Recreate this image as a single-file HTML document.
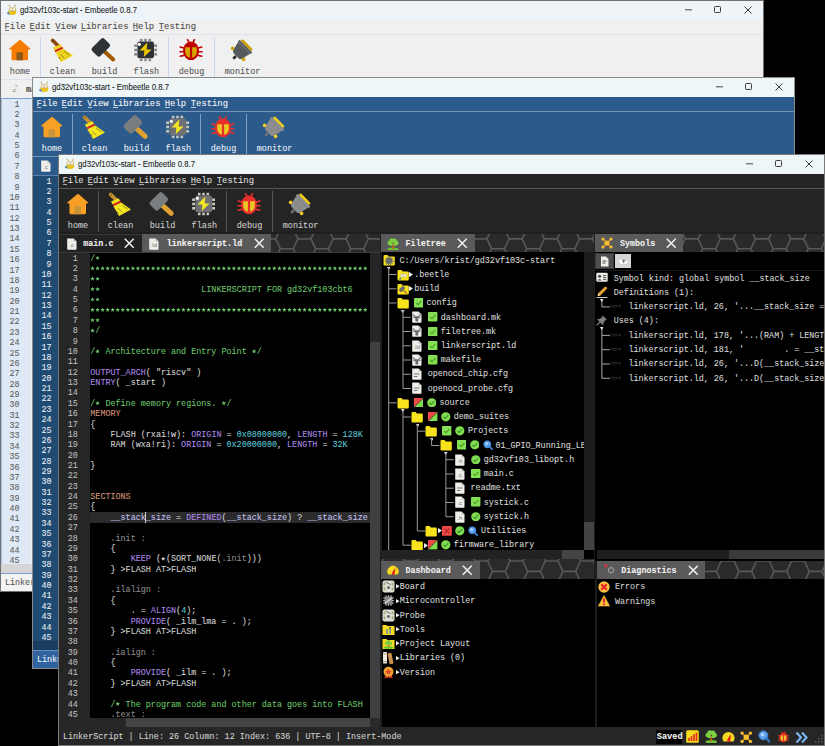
<!DOCTYPE html><html><head><meta charset="utf-8"><style>
*{margin:0;padding:0;box-sizing:border-box}
html,body{width:825px;height:746px;overflow:hidden;background:#000}
body{position:relative;font-family:"Liberation Mono", monospace}
.a{position:absolute}
.win{position:absolute;overflow:hidden}
.t{position:absolute;white-space:pre;line-height:1;-webkit-text-stroke:0.08px currentColor}
.mono{font-family:"Liberation Mono", monospace}
.sans{font-family:"Liberation Sans", sans-serif}
u{text-decoration:underline;text-underline-offset:1px;text-decoration-thickness:1px}
</style></head><body><div class="win" style="left:0px;top:0px;width:764px;height:592px;background:#f0f0f0"><div class="a" style="left:0px;top:0px;width:764px;height:20px;background:#eef4f8;"></div><svg class="a" style="left:5.5px;top:3.5px" width="11.5" height="11.5" viewBox="0 0 10 10"><path d="M1.2 8.6 Q0.8 6.6 3 6.6 L4 9.4 Z" fill="#2f6ec8"/><ellipse cx="5.6" cy="6.6" rx="3.4" ry="3" fill="#e8c21a"/><circle cx="4.3" cy="4.6" r="1.6" fill="#f4eedd" stroke="#b09040" stroke-width="0.4"/><circle cx="6.9" cy="4.6" r="1.6" fill="#f4eedd" stroke="#b09040" stroke-width="0.4"/><path d="M3.6 2.6 L2.6 0.4 M7.4 2.6 L8.2 0.4" stroke="#c8a050" stroke-width="0.8"/></svg><span class="t" style="left:19.80px;top:5.88px;font-size:8.9px;color:#1c1c1c;font-family:'Liberation Sans',sans-serif;transform:scaleX(0.875);transform-origin:0 0;">gd32vf103c-start - Embeetle 0.8.7</span><svg class="a" style="left:744px;top:5.6px" width="8" height="8" viewBox="0 0 8 8"><path d="M0.5 0.5 L7.5 7.5 M7.5 0.5 L0.5 7.5" stroke="#333" stroke-width="0.95"/></svg><svg class="a" style="left:714.1px;top:6.1px" width="7" height="7" viewBox="0 0 7 7"><rect x="0.5" y="0.5" width="6" height="6" rx="0.9" fill="none" stroke="#333" stroke-width="0.95"/></svg><svg class="a" style="left:684.5px;top:6.1px" width="7" height="7" viewBox="0 0 7 7"><path d="M0 3.8 L7 3.8" stroke="#333" stroke-width="0.9"/></svg><div class="a" style="left:0px;top:20px;width:800px;height:14px;background:#f0f0f0;"></div><div class="a" style="left:0px;top:34px;width:800px;height:1px;background:#dbe4ee;"></div><span class="t" style="left:4.40px;top:23.24px;font-size:8.9px;color:#4a4a4a;font-family:'Liberation Mono',monospace;letter-spacing:-0.02px;">File</span><div class="a" style="left:4.7px;top:30.4px;width:4.8px;height:0.8px;background:#4a4a4a;opacity:0.75"></div><span class="t" style="left:29.60px;top:23.24px;font-size:8.9px;color:#4a4a4a;font-family:'Liberation Mono',monospace;letter-spacing:-0.02px;">Edit</span><div class="a" style="left:29.900000000000002px;top:30.4px;width:4.8px;height:0.8px;background:#4a4a4a;opacity:0.75"></div><span class="t" style="left:55.30px;top:23.24px;font-size:8.9px;color:#4a4a4a;font-family:'Liberation Mono',monospace;letter-spacing:-0.02px;">View</span><div class="a" style="left:55.599999999999994px;top:30.4px;width:4.8px;height:0.8px;background:#4a4a4a;opacity:0.75"></div><span class="t" style="left:80.70px;top:23.24px;font-size:8.9px;color:#4a4a4a;font-family:'Liberation Mono',monospace;letter-spacing:-0.02px;">Libraries</span><div class="a" style="left:81.0px;top:30.4px;width:4.8px;height:0.8px;background:#4a4a4a;opacity:0.75"></div><span class="t" style="left:132.80px;top:23.24px;font-size:8.9px;color:#4a4a4a;font-family:'Liberation Mono',monospace;letter-spacing:-0.02px;">Help</span><div class="a" style="left:133.10000000000002px;top:30.4px;width:4.8px;height:0.8px;background:#4a4a4a;opacity:0.75"></div><span class="t" style="left:158.80px;top:23.24px;font-size:8.9px;color:#4a4a4a;font-family:'Liberation Mono',monospace;letter-spacing:-0.02px;">Testing</span><div class="a" style="left:159.10000000000002px;top:30.4px;width:4.8px;height:0.8px;background:#4a4a4a;opacity:0.75"></div><div class="a" style="left:0px;top:35px;width:800px;height:44px;background:#f0f0f0;"></div><div class="a" style="left:40.2px;top:37px;width:1px;height:41px;background:#c9d7e8;"></div><div class="a" style="left:168.2px;top:37px;width:1px;height:41px;background:#c9d7e8;"></div><div class="a" style="left:214.0px;top:37px;width:1px;height:41px;background:#c9d7e8;"></div><svg class="a" style="left:5.5px;top:36px" width="28" height="28" viewBox="0 0 28 28"><path d="M13.5 4 Q14 3.6 14.5 4 L24.2 12.6 Q24.5 13.6 23.5 13.6 L22 13.6 L22 23 Q22 24.3 20.7 24.3 L6.8 24.3 Q5.5 24.3 5.5 23 L5.5 13.6 L4 13.6 Q3 13.6 3.3 12.6 Z" fill="#f57c00"/><path d="M10.5 24.3 L10.5 17.5 Q10.5 16.3 11.7 16.3 L15.8 16.3 Q17 16.3 17 17.5 L17 24.3 Z" fill="#8b5a1a"/></svg><span class="t" style="left:9.80px;top:67.54px;font-size:8.5px;color:#555555;font-family:'Liberation Mono',monospace;">home</span><svg class="a" style="left:48px;top:36px" width="28" height="28" viewBox="0 0 28 28"><path d="M4.6 4.4 L10.6 10.2" stroke="#8b4a10" stroke-width="3.6" stroke-linecap="round"/><circle cx="5.2" cy="4.8" r="0.7" fill="#5a3a10"/><path d="M5 11.4 L12.4 8.2 L14.2 10.8 L6.6 14.4 Z" fill="#ecd21e"/><path d="M6.6 14.4 L14.2 10.8 L15.2 12.6 L7.4 16.2 Z" fill="#d01010"/><path d="M7.4 16.2 L15.2 12.6 L25 19.6 L13 26 Z" fill="#ecd21e"/><path d="M16.5 15.5 L21.5 19 M12.5 18.5 L16.5 22.5 M10.8 21 L12.4 23.6" stroke="#3a3a10" stroke-width="0.8" stroke-dasharray="0.9 0.5"/></svg><span class="t" style="left:49.77px;top:67.54px;font-size:8.5px;color:#555555;font-family:'Liberation Mono',monospace;">clean</span><svg class="a" style="left:90px;top:36px" width="28" height="28" viewBox="0 0 28 28"><path d="M14.2 15.2 L23.2 23.4" stroke="#a05a00" stroke-width="4" stroke-linecap="round"/><rect x="-8.6" y="-5.8" width="17.2" height="11.6" rx="2.2" fill="#2e3236" transform="translate(10.8 11.4) rotate(-45)"/></svg><span class="t" style="left:91.78px;top:67.54px;font-size:8.5px;color:#555555;font-family:'Liberation Mono',monospace;">build</span><svg class="a" style="left:131.8px;top:36px" width="28" height="28" viewBox="0 0 28 28"><rect x="7.8999999999999995" y="2.8" width="2.6" height="2.6" fill="#8a8a8a"/><rect x="7.8999999999999995" y="22.6" width="2.6" height="2.6" fill="#8a8a8a"/><rect x="2.2" y="8.399999999999999" width="2.8" height="2.6" fill="#8a8a8a"/><rect x="22.2" y="8.399999999999999" width="2.8" height="2.6" fill="#8a8a8a"/><rect x="12.2" y="2.8" width="2.6" height="2.6" fill="#8a8a8a"/><rect x="12.2" y="22.6" width="2.6" height="2.6" fill="#8a8a8a"/><rect x="2.2" y="12.7" width="2.8" height="2.6" fill="#8a8a8a"/><rect x="22.2" y="12.7" width="2.8" height="2.6" fill="#8a8a8a"/><rect x="16.5" y="2.8" width="2.6" height="2.6" fill="#8a8a8a"/><rect x="16.5" y="22.6" width="2.6" height="2.6" fill="#8a8a8a"/><rect x="2.2" y="17.0" width="2.8" height="2.6" fill="#8a8a8a"/><rect x="22.2" y="17.0" width="2.8" height="2.6" fill="#8a8a8a"/><rect x="5.4" y="5.6" width="16.6" height="16.6" rx="2" fill="#2e3236"/><circle cx="7.4" cy="8.3" r="1.6" fill="#fff"/><path d="M15.4 6.6 L7.6 14.4 L12.4 14.6 L11.8 21 L19.6 13.4 L14.6 13.4 Z" fill="#f0c800"/></svg><span class="t" style="left:133.58px;top:67.54px;font-size:8.5px;color:#555555;font-family:'Liberation Mono',monospace;">flash</span><svg class="a" style="left:177px;top:36px" width="28" height="28" viewBox="0 0 28 28"><path d="M10.5 3.6 L11.8 6 M17.5 3.6 L16.2 6 M3.2 11 L7 12 M3 15.8 L7 15.8 M3.2 20.2 L7 19.4 M24.8 11 L21 12 M25 15.8 L21 15.8 M24.8 20.2 L21 19.4" stroke="#c00000" stroke-width="1.6" stroke-linecap="round"/><ellipse cx="14" cy="14.8" rx="8" ry="9.3" fill="#c00000"/><path d="M8.2 11.2 L12.9 11.2 L12.9 21.8 Q8.6 20.6 8.2 16 Z" fill="#d4a800"/><path d="M19.8 11.2 L15.1 11.2 L15.1 21.8 Q19.4 20.6 19.8 16 Z" fill="#d4a800"/></svg><span class="t" style="left:178.78px;top:67.54px;font-size:8.5px;color:#555555;font-family:'Liberation Mono',monospace;">debug</span><svg class="a" style="left:228px;top:36px" width="28" height="28" viewBox="0 0 28 28"><g transform="rotate(45 14 14)"><path d="M5.6 11 L22.4 11 L20.2 20 Q19.6 22.2 17.4 22.2 L10.6 22.2 Q8.4 22.2 7.8 20 Z" fill="#55595d"/><rect x="5" y="8.3" width="18" height="2.8" rx="0.8" fill="#5e6266"/><rect x="6.6" y="5.8" width="14.6" height="2.6" rx="1.2" fill="#c8a000"/><rect x="12.6" y="22.5" width="2.8" height="4" rx="1" fill="#2a2a2a"/></g><circle cx="4.6" cy="12.4" r="1.8" fill="#c8a000"/><circle cx="15.6" cy="23.4" r="1.8" fill="#c8a000"/></svg><span class="t" style="left:224.72px;top:67.54px;font-size:8.5px;color:#555555;font-family:'Liberation Mono',monospace;">monitor</span><div class="a" style="left:0px;top:79px;width:764px;height:1px;background:#dbe4ee;"></div><div class="a" style="left:0px;top:80px;width:764px;height:18px;background:#f0f0f0;"></div><div class="a" style="left:0px;top:98px;width:764px;height:1px;background:#7f9fcf;"></div><svg class="a" style="left:7.5px;top:82.5px" width="12" height="12.5" viewBox="0 0 12 12.5"><path d="M1.2 0.5 L7.5 0.5 L10.5 3.5 L10.5 11 Q10.5 11.8 9.7 11.8 L2 11.8 Q1.2 11.8 1.2 11 Z" fill="#eeeeea"/><path d="M7.5 0.5 L7.5 3.5 L10.5 3.5 Z" fill="#c4c4bc"/><text x="5.8" y="9.4" font-size="6" text-anchor="middle" fill="#777" font-family="Liberation Sans">.c</text></svg><span class="t" style="left:26.00px;top:85.62px;font-size:8.4px;color:#4a4a4a;font-family:'Liberation Mono',monospace;font-weight:bold;">main.c</span><div class="a" style="left:0px;top:99px;width:31px;height:465px;background:#dfe9f5;"></div><div class="a" style="left:1px;top:98px;width:1px;height:476px;background:#a4bcdc;"></div><span class="t" style="left:14.57px;top:100.63px;font-size:8.38px;color:#5e5e5e;font-family:'Liberation Mono',monospace;">1</span><span class="t" style="left:14.57px;top:111.00px;font-size:8.38px;color:#5e5e5e;font-family:'Liberation Mono',monospace;">2</span><span class="t" style="left:14.57px;top:121.37px;font-size:8.38px;color:#5e5e5e;font-family:'Liberation Mono',monospace;">3</span><span class="t" style="left:14.57px;top:131.74px;font-size:8.38px;color:#5e5e5e;font-family:'Liberation Mono',monospace;">4</span><span class="t" style="left:14.57px;top:142.11px;font-size:8.38px;color:#5e5e5e;font-family:'Liberation Mono',monospace;">5</span><span class="t" style="left:14.57px;top:152.48px;font-size:8.38px;color:#5e5e5e;font-family:'Liberation Mono',monospace;">6</span><span class="t" style="left:14.57px;top:162.85px;font-size:8.38px;color:#5e5e5e;font-family:'Liberation Mono',monospace;">7</span><span class="t" style="left:14.57px;top:173.22px;font-size:8.38px;color:#5e5e5e;font-family:'Liberation Mono',monospace;">8</span><span class="t" style="left:14.57px;top:183.59px;font-size:8.38px;color:#5e5e5e;font-family:'Liberation Mono',monospace;">9</span><span class="t" style="left:9.54px;top:193.96px;font-size:8.38px;color:#5e5e5e;font-family:'Liberation Mono',monospace;">10</span><span class="t" style="left:9.54px;top:204.33px;font-size:8.38px;color:#5e5e5e;font-family:'Liberation Mono',monospace;">11</span><span class="t" style="left:9.54px;top:214.70px;font-size:8.38px;color:#5e5e5e;font-family:'Liberation Mono',monospace;">12</span><span class="t" style="left:9.54px;top:225.07px;font-size:8.38px;color:#5e5e5e;font-family:'Liberation Mono',monospace;">13</span><span class="t" style="left:9.54px;top:235.44px;font-size:8.38px;color:#5e5e5e;font-family:'Liberation Mono',monospace;">14</span><span class="t" style="left:9.54px;top:245.81px;font-size:8.38px;color:#5e5e5e;font-family:'Liberation Mono',monospace;">15</span><span class="t" style="left:9.54px;top:256.18px;font-size:8.38px;color:#5e5e5e;font-family:'Liberation Mono',monospace;">16</span><span class="t" style="left:9.54px;top:266.55px;font-size:8.38px;color:#5e5e5e;font-family:'Liberation Mono',monospace;">17</span><span class="t" style="left:9.54px;top:276.92px;font-size:8.38px;color:#5e5e5e;font-family:'Liberation Mono',monospace;">18</span><span class="t" style="left:9.54px;top:287.29px;font-size:8.38px;color:#5e5e5e;font-family:'Liberation Mono',monospace;">19</span><span class="t" style="left:9.54px;top:297.66px;font-size:8.38px;color:#5e5e5e;font-family:'Liberation Mono',monospace;">20</span><span class="t" style="left:9.54px;top:308.03px;font-size:8.38px;color:#5e5e5e;font-family:'Liberation Mono',monospace;">21</span><span class="t" style="left:9.54px;top:318.40px;font-size:8.38px;color:#5e5e5e;font-family:'Liberation Mono',monospace;">22</span><span class="t" style="left:9.54px;top:328.77px;font-size:8.38px;color:#5e5e5e;font-family:'Liberation Mono',monospace;">23</span><span class="t" style="left:9.54px;top:339.14px;font-size:8.38px;color:#5e5e5e;font-family:'Liberation Mono',monospace;">24</span><span class="t" style="left:9.54px;top:349.51px;font-size:8.38px;color:#5e5e5e;font-family:'Liberation Mono',monospace;">25</span><span class="t" style="left:9.54px;top:359.88px;font-size:8.38px;color:#5e5e5e;font-family:'Liberation Mono',monospace;">26</span><span class="t" style="left:9.54px;top:370.25px;font-size:8.38px;color:#5e5e5e;font-family:'Liberation Mono',monospace;">27</span><span class="t" style="left:9.54px;top:380.62px;font-size:8.38px;color:#5e5e5e;font-family:'Liberation Mono',monospace;">28</span><span class="t" style="left:9.54px;top:390.99px;font-size:8.38px;color:#5e5e5e;font-family:'Liberation Mono',monospace;">29</span><span class="t" style="left:9.54px;top:401.36px;font-size:8.38px;color:#5e5e5e;font-family:'Liberation Mono',monospace;">30</span><span class="t" style="left:9.54px;top:411.73px;font-size:8.38px;color:#5e5e5e;font-family:'Liberation Mono',monospace;">31</span><span class="t" style="left:9.54px;top:422.10px;font-size:8.38px;color:#5e5e5e;font-family:'Liberation Mono',monospace;">32</span><span class="t" style="left:9.54px;top:432.47px;font-size:8.38px;color:#5e5e5e;font-family:'Liberation Mono',monospace;">33</span><span class="t" style="left:9.54px;top:442.84px;font-size:8.38px;color:#5e5e5e;font-family:'Liberation Mono',monospace;">34</span><span class="t" style="left:9.54px;top:453.21px;font-size:8.38px;color:#5e5e5e;font-family:'Liberation Mono',monospace;">35</span><span class="t" style="left:9.54px;top:463.58px;font-size:8.38px;color:#5e5e5e;font-family:'Liberation Mono',monospace;">36</span><span class="t" style="left:9.54px;top:473.95px;font-size:8.38px;color:#5e5e5e;font-family:'Liberation Mono',monospace;">37</span><span class="t" style="left:9.54px;top:484.32px;font-size:8.38px;color:#5e5e5e;font-family:'Liberation Mono',monospace;">38</span><span class="t" style="left:9.54px;top:494.69px;font-size:8.38px;color:#5e5e5e;font-family:'Liberation Mono',monospace;">39</span><span class="t" style="left:9.54px;top:505.06px;font-size:8.38px;color:#5e5e5e;font-family:'Liberation Mono',monospace;">40</span><span class="t" style="left:9.54px;top:515.43px;font-size:8.38px;color:#5e5e5e;font-family:'Liberation Mono',monospace;">41</span><span class="t" style="left:9.54px;top:525.80px;font-size:8.38px;color:#5e5e5e;font-family:'Liberation Mono',monospace;">42</span><span class="t" style="left:9.54px;top:536.17px;font-size:8.38px;color:#5e5e5e;font-family:'Liberation Mono',monospace;">43</span><span class="t" style="left:9.54px;top:546.54px;font-size:8.38px;color:#5e5e5e;font-family:'Liberation Mono',monospace;">44</span><span class="t" style="left:9.54px;top:556.91px;font-size:8.38px;color:#5e5e5e;font-family:'Liberation Mono',monospace;">45</span><div class="a" style="left:0px;top:564px;width:764px;height:9px;background:#d6d6d6;"></div><div class="a" style="left:0px;top:573px;width:764px;height:1px;background:#7f9fcf;"></div><div class="a" style="left:0px;top:574px;width:764px;height:17px;background:#f3f3f3;"></div><span class="t" style="left:4.90px;top:579.39px;font-size:8.44px;color:#555;font-family:'Liberation Mono',monospace;">LinkerScript | Line: 26 Column: 12 Index: 636 | UTF-8 | Insert-Mode</span><div class="a" style="left:0;top:0;width:764px;height:592px;border:1px solid #707070"></div></div><div class="win" style="left:32px;top:77px;width:763px;height:592px;background:#2c5a8a"><div class="a" style="left:0px;top:0px;width:763px;height:20px;background:#eef6f8;"></div><svg class="a" style="left:5.5px;top:3.5px" width="11.5" height="11.5" viewBox="0 0 10 10"><path d="M1.2 8.6 Q0.8 6.6 3 6.6 L4 9.4 Z" fill="#2f6ec8"/><ellipse cx="5.6" cy="6.6" rx="3.4" ry="3" fill="#e8c21a"/><circle cx="4.3" cy="4.6" r="1.6" fill="#f4eedd" stroke="#b09040" stroke-width="0.4"/><circle cx="6.9" cy="4.6" r="1.6" fill="#f4eedd" stroke="#b09040" stroke-width="0.4"/><path d="M3.6 2.6 L2.6 0.4 M7.4 2.6 L8.2 0.4" stroke="#c8a050" stroke-width="0.8"/></svg><span class="t" style="left:19.80px;top:5.88px;font-size:8.9px;color:#1c1c1c;font-family:'Liberation Sans',sans-serif;transform:scaleX(0.875);transform-origin:0 0;">gd32vf103c-start - Embeetle 0.8.7</span><svg class="a" style="left:743px;top:5.6px" width="8" height="8" viewBox="0 0 8 8"><path d="M0.5 0.5 L7.5 7.5 M7.5 0.5 L0.5 7.5" stroke="#333" stroke-width="0.95"/></svg><svg class="a" style="left:713.1px;top:6.1px" width="7" height="7" viewBox="0 0 7 7"><rect x="0.5" y="0.5" width="6" height="6" rx="0.9" fill="none" stroke="#333" stroke-width="0.95"/></svg><svg class="a" style="left:683.5px;top:6.1px" width="7" height="7" viewBox="0 0 7 7"><path d="M0 3.8 L7 3.8" stroke="#333" stroke-width="0.9"/></svg><div class="a" style="left:0px;top:20px;width:800px;height:14px;background:#2c5a8a;"></div><div class="a" style="left:0px;top:34px;width:800px;height:1px;background:#7896b8;"></div><span class="t" style="left:4.40px;top:23.24px;font-size:8.9px;color:#f2f6fa;font-family:'Liberation Mono',monospace;letter-spacing:-0.02px;">File</span><div class="a" style="left:4.7px;top:30.4px;width:4.8px;height:0.8px;background:#f2f6fa;opacity:0.75"></div><span class="t" style="left:29.60px;top:23.24px;font-size:8.9px;color:#f2f6fa;font-family:'Liberation Mono',monospace;letter-spacing:-0.02px;">Edit</span><div class="a" style="left:29.900000000000002px;top:30.4px;width:4.8px;height:0.8px;background:#f2f6fa;opacity:0.75"></div><span class="t" style="left:55.30px;top:23.24px;font-size:8.9px;color:#f2f6fa;font-family:'Liberation Mono',monospace;letter-spacing:-0.02px;">View</span><div class="a" style="left:55.599999999999994px;top:30.4px;width:4.8px;height:0.8px;background:#f2f6fa;opacity:0.75"></div><span class="t" style="left:80.70px;top:23.24px;font-size:8.9px;color:#f2f6fa;font-family:'Liberation Mono',monospace;letter-spacing:-0.02px;">Libraries</span><div class="a" style="left:81.0px;top:30.4px;width:4.8px;height:0.8px;background:#f2f6fa;opacity:0.75"></div><span class="t" style="left:132.80px;top:23.24px;font-size:8.9px;color:#f2f6fa;font-family:'Liberation Mono',monospace;letter-spacing:-0.02px;">Help</span><div class="a" style="left:133.10000000000002px;top:30.4px;width:4.8px;height:0.8px;background:#f2f6fa;opacity:0.75"></div><span class="t" style="left:158.80px;top:23.24px;font-size:8.9px;color:#f2f6fa;font-family:'Liberation Mono',monospace;letter-spacing:-0.02px;">Testing</span><div class="a" style="left:159.10000000000002px;top:30.4px;width:4.8px;height:0.8px;background:#f2f6fa;opacity:0.75"></div><div class="a" style="left:0px;top:35px;width:800px;height:44px;background:#2c5a8a;"></div><div class="a" style="left:40.2px;top:37px;width:1px;height:41px;background:#7f9fc4;"></div><div class="a" style="left:168.2px;top:37px;width:1px;height:41px;background:#7f9fc4;"></div><div class="a" style="left:214.0px;top:37px;width:1px;height:41px;background:#7f9fc4;"></div><svg class="a" style="left:5.5px;top:36px" width="28" height="28" viewBox="0 0 28 28"><path d="M13.5 4 Q14 3.6 14.5 4 L24.2 12.6 Q24.5 13.6 23.5 13.6 L22 13.6 L22 23 Q22 24.3 20.7 24.3 L6.8 24.3 Q5.5 24.3 5.5 23 L5.5 13.6 L4 13.6 Q3 13.6 3.3 12.6 Z" fill="#f7a025"/><path d="M10.5 24.3 L10.5 17.5 Q10.5 16.3 11.7 16.3 L15.8 16.3 Q17 16.3 17 17.5 L17 24.3 Z" fill="#c8943a"/></svg><span class="t" style="left:9.80px;top:67.54px;font-size:8.5px;color:#e8eef6;font-family:'Liberation Mono',monospace;">home</span><svg class="a" style="left:48px;top:36px" width="28" height="28" viewBox="0 0 28 28"><path d="M4.6 4.4 L10.6 10.2" stroke="#c8902e" stroke-width="3.6" stroke-linecap="round"/><circle cx="5.2" cy="4.8" r="0.7" fill="#5a3a10"/><path d="M5 11.4 L12.4 8.2 L14.2 10.8 L6.6 14.4 Z" fill="#f3e620"/><path d="M6.6 14.4 L14.2 10.8 L15.2 12.6 L7.4 16.2 Z" fill="#e8251c"/><path d="M7.4 16.2 L15.2 12.6 L25 19.6 L13 26 Z" fill="#f3e620"/><path d="M16.5 15.5 L21.5 19 M12.5 18.5 L16.5 22.5 M10.8 21 L12.4 23.6" stroke="#3a3a10" stroke-width="0.8" stroke-dasharray="0.9 0.5"/></svg><span class="t" style="left:49.77px;top:67.54px;font-size:8.5px;color:#e8eef6;font-family:'Liberation Mono',monospace;">clean</span><svg class="a" style="left:90px;top:36px" width="28" height="28" viewBox="0 0 28 28"><path d="M14.2 15.2 L23.2 23.4" stroke="#e0a030" stroke-width="5" stroke-linecap="round"/><rect x="-8.6" y="-5.8" width="17.2" height="11.6" rx="2.2" fill="#7a7d80" transform="translate(10.8 11.4) rotate(-45)"/></svg><span class="t" style="left:91.78px;top:67.54px;font-size:8.5px;color:#e8eef6;font-family:'Liberation Mono',monospace;">build</span><svg class="a" style="left:131.8px;top:36px" width="28" height="28" viewBox="0 0 28 28"><rect x="7.8999999999999995" y="2.8" width="2.6" height="2.6" fill="#c8c8be"/><rect x="7.8999999999999995" y="22.6" width="2.6" height="2.6" fill="#c8c8be"/><rect x="2.2" y="8.399999999999999" width="2.8" height="2.6" fill="#c8c8be"/><rect x="22.2" y="8.399999999999999" width="2.8" height="2.6" fill="#c8c8be"/><rect x="12.2" y="2.8" width="2.6" height="2.6" fill="#c8c8be"/><rect x="12.2" y="22.6" width="2.6" height="2.6" fill="#c8c8be"/><rect x="2.2" y="12.7" width="2.8" height="2.6" fill="#c8c8be"/><rect x="22.2" y="12.7" width="2.8" height="2.6" fill="#c8c8be"/><rect x="16.5" y="2.8" width="2.6" height="2.6" fill="#c8c8be"/><rect x="16.5" y="22.6" width="2.6" height="2.6" fill="#c8c8be"/><rect x="2.2" y="17.0" width="2.8" height="2.6" fill="#c8c8be"/><rect x="22.2" y="17.0" width="2.8" height="2.6" fill="#c8c8be"/><rect x="5.4" y="5.6" width="16.6" height="16.6" rx="2" fill="#6e7073"/><circle cx="7.4" cy="8.3" r="1.6" fill="#fff"/><path d="M15.4 6.6 L7.6 14.4 L12.4 14.6 L11.8 21 L19.6 13.4 L14.6 13.4 Z" fill="#f6e81e"/></svg><span class="t" style="left:133.58px;top:67.54px;font-size:8.5px;color:#e8eef6;font-family:'Liberation Mono',monospace;">flash</span><svg class="a" style="left:177px;top:36px" width="28" height="28" viewBox="0 0 28 28"><path d="M10.5 3.6 L11.8 6 M17.5 3.6 L16.2 6 M3.2 11 L7 12 M3 15.8 L7 15.8 M3.2 20.2 L7 19.4 M24.8 11 L21 12 M25 15.8 L21 15.8 M24.8 20.2 L21 19.4" stroke="#e8302a" stroke-width="1.6" stroke-linecap="round"/><ellipse cx="14" cy="14.8" rx="8" ry="9.3" fill="#e8302a"/><path d="M8.2 11.2 L12.9 11.2 L12.9 21.8 Q8.6 20.6 8.2 16 Z" fill="#ecc825"/><path d="M19.8 11.2 L15.1 11.2 L15.1 21.8 Q19.4 20.6 19.8 16 Z" fill="#ecc825"/></svg><span class="t" style="left:178.78px;top:67.54px;font-size:8.5px;color:#e8eef6;font-family:'Liberation Mono',monospace;">debug</span><svg class="a" style="left:228px;top:36px" width="28" height="28" viewBox="0 0 28 28"><g transform="rotate(45 14 14)"><path d="M5.6 11 L22.4 11 L20.2 20 Q19.6 22.2 17.4 22.2 L10.6 22.2 Q8.4 22.2 7.8 20 Z" fill="#8a8c8e"/><rect x="5" y="8.3" width="18" height="2.8" rx="0.8" fill="#8e9092"/><rect x="6.6" y="5.8" width="14.6" height="2.6" rx="1.2" fill="#f0cc20"/><rect x="12.6" y="22.5" width="2.8" height="4" rx="1" fill="#6e7072"/></g><circle cx="4.6" cy="12.4" r="1.8" fill="#f0cc20"/><circle cx="15.6" cy="23.4" r="1.8" fill="#f0cc20"/></svg><span class="t" style="left:224.72px;top:67.54px;font-size:8.5px;color:#e8eef6;font-family:'Liberation Mono',monospace;">monitor</span><div class="a" style="left:0px;top:79px;width:763px;height:1px;background:#7896b8;"></div><div class="a" style="left:0px;top:80px;width:763px;height:18px;background:#2c5a8a;"></div><div class="a" style="left:0px;top:98px;width:763px;height:1px;background:#5f83aa;"></div><svg class="a" style="left:7.5px;top:82.5px" width="12" height="12.5" viewBox="0 0 12 12.5"><path d="M1.2 0.5 L7.5 0.5 L10.5 3.5 L10.5 11 Q10.5 11.8 9.7 11.8 L2 11.8 Q1.2 11.8 1.2 11 Z" fill="#eeeeea"/><path d="M7.5 0.5 L7.5 3.5 L10.5 3.5 Z" fill="#c4c4bc"/><text x="5.8" y="9.4" font-size="6" text-anchor="middle" fill="#777" font-family="Liberation Sans">.c</text></svg><span class="t" style="left:26.00px;top:85.62px;font-size:8.4px;color:#f2f6fa;font-family:'Liberation Mono',monospace;font-weight:bold;">main.c</span><div class="a" style="left:0px;top:99px;width:31px;height:465px;background:#1f4a72;"></div><span class="t" style="left:14.57px;top:100.63px;font-size:8.38px;color:#e6edf4;font-family:'Liberation Mono',monospace;">1</span><span class="t" style="left:14.57px;top:111.00px;font-size:8.38px;color:#e6edf4;font-family:'Liberation Mono',monospace;">2</span><span class="t" style="left:14.57px;top:121.37px;font-size:8.38px;color:#e6edf4;font-family:'Liberation Mono',monospace;">3</span><span class="t" style="left:14.57px;top:131.74px;font-size:8.38px;color:#e6edf4;font-family:'Liberation Mono',monospace;">4</span><span class="t" style="left:14.57px;top:142.11px;font-size:8.38px;color:#e6edf4;font-family:'Liberation Mono',monospace;">5</span><span class="t" style="left:14.57px;top:152.48px;font-size:8.38px;color:#e6edf4;font-family:'Liberation Mono',monospace;">6</span><span class="t" style="left:14.57px;top:162.85px;font-size:8.38px;color:#e6edf4;font-family:'Liberation Mono',monospace;">7</span><span class="t" style="left:14.57px;top:173.22px;font-size:8.38px;color:#e6edf4;font-family:'Liberation Mono',monospace;">8</span><span class="t" style="left:14.57px;top:183.59px;font-size:8.38px;color:#e6edf4;font-family:'Liberation Mono',monospace;">9</span><span class="t" style="left:9.54px;top:193.96px;font-size:8.38px;color:#e6edf4;font-family:'Liberation Mono',monospace;">10</span><span class="t" style="left:9.54px;top:204.33px;font-size:8.38px;color:#e6edf4;font-family:'Liberation Mono',monospace;">11</span><span class="t" style="left:9.54px;top:214.70px;font-size:8.38px;color:#e6edf4;font-family:'Liberation Mono',monospace;">12</span><span class="t" style="left:9.54px;top:225.07px;font-size:8.38px;color:#e6edf4;font-family:'Liberation Mono',monospace;">13</span><span class="t" style="left:9.54px;top:235.44px;font-size:8.38px;color:#e6edf4;font-family:'Liberation Mono',monospace;">14</span><span class="t" style="left:9.54px;top:245.81px;font-size:8.38px;color:#e6edf4;font-family:'Liberation Mono',monospace;">15</span><span class="t" style="left:9.54px;top:256.18px;font-size:8.38px;color:#e6edf4;font-family:'Liberation Mono',monospace;">16</span><span class="t" style="left:9.54px;top:266.55px;font-size:8.38px;color:#e6edf4;font-family:'Liberation Mono',monospace;">17</span><span class="t" style="left:9.54px;top:276.92px;font-size:8.38px;color:#e6edf4;font-family:'Liberation Mono',monospace;">18</span><span class="t" style="left:9.54px;top:287.29px;font-size:8.38px;color:#e6edf4;font-family:'Liberation Mono',monospace;">19</span><span class="t" style="left:9.54px;top:297.66px;font-size:8.38px;color:#e6edf4;font-family:'Liberation Mono',monospace;">20</span><span class="t" style="left:9.54px;top:308.03px;font-size:8.38px;color:#e6edf4;font-family:'Liberation Mono',monospace;">21</span><span class="t" style="left:9.54px;top:318.40px;font-size:8.38px;color:#e6edf4;font-family:'Liberation Mono',monospace;">22</span><span class="t" style="left:9.54px;top:328.77px;font-size:8.38px;color:#e6edf4;font-family:'Liberation Mono',monospace;">23</span><span class="t" style="left:9.54px;top:339.14px;font-size:8.38px;color:#e6edf4;font-family:'Liberation Mono',monospace;">24</span><span class="t" style="left:9.54px;top:349.51px;font-size:8.38px;color:#e6edf4;font-family:'Liberation Mono',monospace;">25</span><span class="t" style="left:9.54px;top:359.88px;font-size:8.38px;color:#e6edf4;font-family:'Liberation Mono',monospace;">26</span><span class="t" style="left:9.54px;top:370.25px;font-size:8.38px;color:#e6edf4;font-family:'Liberation Mono',monospace;">27</span><span class="t" style="left:9.54px;top:380.62px;font-size:8.38px;color:#e6edf4;font-family:'Liberation Mono',monospace;">28</span><span class="t" style="left:9.54px;top:390.99px;font-size:8.38px;color:#e6edf4;font-family:'Liberation Mono',monospace;">29</span><span class="t" style="left:9.54px;top:401.36px;font-size:8.38px;color:#e6edf4;font-family:'Liberation Mono',monospace;">30</span><span class="t" style="left:9.54px;top:411.73px;font-size:8.38px;color:#e6edf4;font-family:'Liberation Mono',monospace;">31</span><span class="t" style="left:9.54px;top:422.10px;font-size:8.38px;color:#e6edf4;font-family:'Liberation Mono',monospace;">32</span><span class="t" style="left:9.54px;top:432.47px;font-size:8.38px;color:#e6edf4;font-family:'Liberation Mono',monospace;">33</span><span class="t" style="left:9.54px;top:442.84px;font-size:8.38px;color:#e6edf4;font-family:'Liberation Mono',monospace;">34</span><span class="t" style="left:9.54px;top:453.21px;font-size:8.38px;color:#e6edf4;font-family:'Liberation Mono',monospace;">35</span><span class="t" style="left:9.54px;top:463.58px;font-size:8.38px;color:#e6edf4;font-family:'Liberation Mono',monospace;">36</span><span class="t" style="left:9.54px;top:473.95px;font-size:8.38px;color:#e6edf4;font-family:'Liberation Mono',monospace;">37</span><span class="t" style="left:9.54px;top:484.32px;font-size:8.38px;color:#e6edf4;font-family:'Liberation Mono',monospace;">38</span><span class="t" style="left:9.54px;top:494.69px;font-size:8.38px;color:#e6edf4;font-family:'Liberation Mono',monospace;">39</span><span class="t" style="left:9.54px;top:505.06px;font-size:8.38px;color:#e6edf4;font-family:'Liberation Mono',monospace;">40</span><span class="t" style="left:9.54px;top:515.43px;font-size:8.38px;color:#e6edf4;font-family:'Liberation Mono',monospace;">41</span><span class="t" style="left:9.54px;top:525.80px;font-size:8.38px;color:#e6edf4;font-family:'Liberation Mono',monospace;">42</span><span class="t" style="left:9.54px;top:536.17px;font-size:8.38px;color:#e6edf4;font-family:'Liberation Mono',monospace;">43</span><span class="t" style="left:9.54px;top:546.54px;font-size:8.38px;color:#e6edf4;font-family:'Liberation Mono',monospace;">44</span><span class="t" style="left:9.54px;top:556.91px;font-size:8.38px;color:#e6edf4;font-family:'Liberation Mono',monospace;">45</span><div class="a" style="left:0px;top:564px;width:763px;height:9px;background:#1b3d60;"></div><div class="a" style="left:0px;top:573px;width:763px;height:1px;background:#6c90bc;"></div><div class="a" style="left:0px;top:574px;width:763px;height:17px;background:#3063a0;"></div><span class="t" style="left:4.90px;top:579.39px;font-size:8.44px;color:#f0f4f8;font-family:'Liberation Mono',monospace;">LinkerScript | Line: 26 Column: 12 Index: 636 | UTF-8 | Insert-Mode</span><div class="a" style="left:0;top:0;width:763px;height:592px;border:1px solid #8a8a8a"></div></div><div class="win" style="left:58px;top:154px;width:767px;height:592px;background:#242424"><div class="a" style="left:0px;top:0px;width:767px;height:20px;background:#eef6f8;"></div><svg class="a" style="left:5.5px;top:3.5px" width="11.5" height="11.5" viewBox="0 0 10 10"><path d="M1.2 8.6 Q0.8 6.6 3 6.6 L4 9.4 Z" fill="#2f6ec8"/><ellipse cx="5.6" cy="6.6" rx="3.4" ry="3" fill="#e8c21a"/><circle cx="4.3" cy="4.6" r="1.6" fill="#f4eedd" stroke="#b09040" stroke-width="0.4"/><circle cx="6.9" cy="4.6" r="1.6" fill="#f4eedd" stroke="#b09040" stroke-width="0.4"/><path d="M3.6 2.6 L2.6 0.4 M7.4 2.6 L8.2 0.4" stroke="#c8a050" stroke-width="0.8"/></svg><span class="t" style="left:19.80px;top:5.88px;font-size:8.9px;color:#1c1c1c;font-family:'Liberation Sans',sans-serif;transform:scaleX(0.875);transform-origin:0 0;">gd32vf103c-start - Embeetle 0.8.7</span><svg class="a" style="left:747px;top:5.6px" width="8" height="8" viewBox="0 0 8 8"><path d="M0.5 0.5 L7.5 7.5 M7.5 0.5 L0.5 7.5" stroke="#333" stroke-width="0.95"/></svg><svg class="a" style="left:717.1px;top:6.1px" width="7" height="7" viewBox="0 0 7 7"><rect x="0.5" y="0.5" width="6" height="6" rx="0.9" fill="none" stroke="#333" stroke-width="0.95"/></svg><svg class="a" style="left:687.5px;top:6.1px" width="7" height="7" viewBox="0 0 7 7"><path d="M0 3.8 L7 3.8" stroke="#333" stroke-width="0.9"/></svg><div class="a" style="left:0px;top:20px;width:800px;height:14px;background:#242424;"></div><div class="a" style="left:0px;top:34px;width:800px;height:1px;background:#555555;"></div><span class="t" style="left:4.40px;top:23.24px;font-size:8.9px;color:#dedede;font-family:'Liberation Mono',monospace;letter-spacing:-0.02px;">File</span><div class="a" style="left:4.7px;top:30.4px;width:4.8px;height:0.8px;background:#dedede;opacity:0.75"></div><span class="t" style="left:29.60px;top:23.24px;font-size:8.9px;color:#dedede;font-family:'Liberation Mono',monospace;letter-spacing:-0.02px;">Edit</span><div class="a" style="left:29.900000000000002px;top:30.4px;width:4.8px;height:0.8px;background:#dedede;opacity:0.75"></div><span class="t" style="left:55.30px;top:23.24px;font-size:8.9px;color:#dedede;font-family:'Liberation Mono',monospace;letter-spacing:-0.02px;">View</span><div class="a" style="left:55.599999999999994px;top:30.4px;width:4.8px;height:0.8px;background:#dedede;opacity:0.75"></div><span class="t" style="left:80.70px;top:23.24px;font-size:8.9px;color:#dedede;font-family:'Liberation Mono',monospace;letter-spacing:-0.02px;">Libraries</span><div class="a" style="left:81.0px;top:30.4px;width:4.8px;height:0.8px;background:#dedede;opacity:0.75"></div><span class="t" style="left:132.80px;top:23.24px;font-size:8.9px;color:#dedede;font-family:'Liberation Mono',monospace;letter-spacing:-0.02px;">Help</span><div class="a" style="left:133.10000000000002px;top:30.4px;width:4.8px;height:0.8px;background:#dedede;opacity:0.75"></div><span class="t" style="left:158.80px;top:23.24px;font-size:8.9px;color:#dedede;font-family:'Liberation Mono',monospace;letter-spacing:-0.02px;">Testing</span><div class="a" style="left:159.10000000000002px;top:30.4px;width:4.8px;height:0.8px;background:#dedede;opacity:0.75"></div><div class="a" style="left:0px;top:35px;width:800px;height:44px;background:#242424;"></div><div class="a" style="left:40.2px;top:37px;width:1px;height:41px;background:#555555;"></div><div class="a" style="left:168.2px;top:37px;width:1px;height:41px;background:#555555;"></div><div class="a" style="left:214.0px;top:37px;width:1px;height:41px;background:#555555;"></div><svg class="a" style="left:5.5px;top:36px" width="28" height="28" viewBox="0 0 28 28"><path d="M13.5 4 Q14 3.6 14.5 4 L24.2 12.6 Q24.5 13.6 23.5 13.6 L22 13.6 L22 23 Q22 24.3 20.7 24.3 L6.8 24.3 Q5.5 24.3 5.5 23 L5.5 13.6 L4 13.6 Q3 13.6 3.3 12.6 Z" fill="#f7a025"/><path d="M10.5 24.3 L10.5 17.5 Q10.5 16.3 11.7 16.3 L15.8 16.3 Q17 16.3 17 17.5 L17 24.3 Z" fill="#c8943a"/></svg><span class="t" style="left:9.80px;top:67.54px;font-size:8.5px;color:#cccccc;font-family:'Liberation Mono',monospace;">home</span><svg class="a" style="left:48px;top:36px" width="28" height="28" viewBox="0 0 28 28"><path d="M4.6 4.4 L10.6 10.2" stroke="#c8902e" stroke-width="3.6" stroke-linecap="round"/><circle cx="5.2" cy="4.8" r="0.7" fill="#5a3a10"/><path d="M5 11.4 L12.4 8.2 L14.2 10.8 L6.6 14.4 Z" fill="#f3e620"/><path d="M6.6 14.4 L14.2 10.8 L15.2 12.6 L7.4 16.2 Z" fill="#e8251c"/><path d="M7.4 16.2 L15.2 12.6 L25 19.6 L13 26 Z" fill="#f3e620"/><path d="M16.5 15.5 L21.5 19 M12.5 18.5 L16.5 22.5 M10.8 21 L12.4 23.6" stroke="#3a3a10" stroke-width="0.8" stroke-dasharray="0.9 0.5"/></svg><span class="t" style="left:49.77px;top:67.54px;font-size:8.5px;color:#cccccc;font-family:'Liberation Mono',monospace;">clean</span><svg class="a" style="left:90px;top:36px" width="28" height="28" viewBox="0 0 28 28"><path d="M14.2 15.2 L23.2 23.4" stroke="#e0a030" stroke-width="5" stroke-linecap="round"/><rect x="-8.6" y="-5.8" width="17.2" height="11.6" rx="2.2" fill="#7a7d80" transform="translate(10.8 11.4) rotate(-45)"/></svg><span class="t" style="left:91.78px;top:67.54px;font-size:8.5px;color:#cccccc;font-family:'Liberation Mono',monospace;">build</span><svg class="a" style="left:131.8px;top:36px" width="28" height="28" viewBox="0 0 28 28"><rect x="7.8999999999999995" y="2.8" width="2.6" height="2.6" fill="#c8c8be"/><rect x="7.8999999999999995" y="22.6" width="2.6" height="2.6" fill="#c8c8be"/><rect x="2.2" y="8.399999999999999" width="2.8" height="2.6" fill="#c8c8be"/><rect x="22.2" y="8.399999999999999" width="2.8" height="2.6" fill="#c8c8be"/><rect x="12.2" y="2.8" width="2.6" height="2.6" fill="#c8c8be"/><rect x="12.2" y="22.6" width="2.6" height="2.6" fill="#c8c8be"/><rect x="2.2" y="12.7" width="2.8" height="2.6" fill="#c8c8be"/><rect x="22.2" y="12.7" width="2.8" height="2.6" fill="#c8c8be"/><rect x="16.5" y="2.8" width="2.6" height="2.6" fill="#c8c8be"/><rect x="16.5" y="22.6" width="2.6" height="2.6" fill="#c8c8be"/><rect x="2.2" y="17.0" width="2.8" height="2.6" fill="#c8c8be"/><rect x="22.2" y="17.0" width="2.8" height="2.6" fill="#c8c8be"/><rect x="5.4" y="5.6" width="16.6" height="16.6" rx="2" fill="#6e7073"/><circle cx="7.4" cy="8.3" r="1.6" fill="#fff"/><path d="M15.4 6.6 L7.6 14.4 L12.4 14.6 L11.8 21 L19.6 13.4 L14.6 13.4 Z" fill="#f6e81e"/></svg><span class="t" style="left:133.58px;top:67.54px;font-size:8.5px;color:#cccccc;font-family:'Liberation Mono',monospace;">flash</span><svg class="a" style="left:177px;top:36px" width="28" height="28" viewBox="0 0 28 28"><path d="M10.5 3.6 L11.8 6 M17.5 3.6 L16.2 6 M3.2 11 L7 12 M3 15.8 L7 15.8 M3.2 20.2 L7 19.4 M24.8 11 L21 12 M25 15.8 L21 15.8 M24.8 20.2 L21 19.4" stroke="#e8302a" stroke-width="1.6" stroke-linecap="round"/><ellipse cx="14" cy="14.8" rx="8" ry="9.3" fill="#e8302a"/><path d="M8.2 11.2 L12.9 11.2 L12.9 21.8 Q8.6 20.6 8.2 16 Z" fill="#ecc825"/><path d="M19.8 11.2 L15.1 11.2 L15.1 21.8 Q19.4 20.6 19.8 16 Z" fill="#ecc825"/></svg><span class="t" style="left:178.78px;top:67.54px;font-size:8.5px;color:#cccccc;font-family:'Liberation Mono',monospace;">debug</span><svg class="a" style="left:228px;top:36px" width="28" height="28" viewBox="0 0 28 28"><g transform="rotate(45 14 14)"><path d="M5.6 11 L22.4 11 L20.2 20 Q19.6 22.2 17.4 22.2 L10.6 22.2 Q8.4 22.2 7.8 20 Z" fill="#8a8c8e"/><rect x="5" y="8.3" width="18" height="2.8" rx="0.8" fill="#8e9092"/><rect x="6.6" y="5.8" width="14.6" height="2.6" rx="1.2" fill="#f0cc20"/><rect x="12.6" y="22.5" width="2.8" height="4" rx="1" fill="#6e7072"/></g><circle cx="4.6" cy="12.4" r="1.8" fill="#f0cc20"/><circle cx="15.6" cy="23.4" r="1.8" fill="#f0cc20"/></svg><span class="t" style="left:224.72px;top:67.54px;font-size:8.5px;color:#cccccc;font-family:'Liberation Mono',monospace;">monitor</span><div class="a" style="left:0px;top:78px;width:767px;height:2px;background:#1f1f1f;"></div><div class="a" style="left:0px;top:80px;width:767px;height:18px;background:#262626;"></div><div class="a" style="left:0px;top:573px;width:767px;height:21px;background:#262626;"></div><span class="t" style="left:4.90px;top:579.39px;font-size:8.44px;color:#d0d0d0;font-family:'Liberation Mono',monospace;">LinkerScript | Line: 26 Column: 12 Index: 636 | UTF-8 | Insert-Mode</span><div class="a" style="left:-58px;top:-154px;width:825px;height:746px"><div class="a" style="left:59px;top:252px;width:31px;height:466px;background:#262626;"></div><div class="a" style="left:89.5px;top:253px;width:281px;height:465px;background:#000;"></div><div class="a" style="left:59px;top:252px;width:321px;height:1px;background:#3a3a3a;"></div><div class="a" style="left:89.5px;top:511.75px;width:281px;height:10.8px;background:#2b2b2d;"></div><span class="t" style="left:72.75px;top:254.60px;font-size:8.42px;color:#bdbdbd;font-family:'Liberation Mono',monospace;">1</span><span class="t" style="left:90.30px;top:254.60px;font-size:8.42px;color:#d6d6d6;font-family:'Liberation Mono',monospace;"><span style="color:#6cc36c">/ </span></span><span class="t" style="left:72.75px;top:264.97px;font-size:8.42px;color:#bdbdbd;font-family:'Liberation Mono',monospace;">2</span><span class="t" style="left:90.30px;top:264.97px;font-size:8.42px;color:#d6d6d6;font-family:'Liberation Mono',monospace;"><span style="color:#6cc36c">                                                       </span></span><span class="t" style="left:72.75px;top:275.34px;font-size:8.42px;color:#bdbdbd;font-family:'Liberation Mono',monospace;">3</span><span class="t" style="left:90.30px;top:275.34px;font-size:8.42px;color:#d6d6d6;font-family:'Liberation Mono',monospace;"><span style="color:#6cc36c">  </span></span><span class="t" style="left:72.75px;top:285.71px;font-size:8.42px;color:#bdbdbd;font-family:'Liberation Mono',monospace;">4</span><span class="t" style="left:90.30px;top:285.71px;font-size:8.42px;color:#d6d6d6;font-family:'Liberation Mono',monospace;"><span style="color:#6cc36c">                      LINKERSCRIPT FOR gd32vf103cbt6</span></span><span class="t" style="left:72.75px;top:296.08px;font-size:8.42px;color:#bdbdbd;font-family:'Liberation Mono',monospace;">5</span><span class="t" style="left:90.30px;top:296.08px;font-size:8.42px;color:#d6d6d6;font-family:'Liberation Mono',monospace;"><span style="color:#6cc36c">  </span></span><span class="t" style="left:72.75px;top:306.45px;font-size:8.42px;color:#bdbdbd;font-family:'Liberation Mono',monospace;">6</span><span class="t" style="left:90.30px;top:306.45px;font-size:8.42px;color:#d6d6d6;font-family:'Liberation Mono',monospace;"><span style="color:#6cc36c">                                                       </span></span><span class="t" style="left:72.75px;top:316.82px;font-size:8.42px;color:#bdbdbd;font-family:'Liberation Mono',monospace;">7</span><span class="t" style="left:90.30px;top:316.82px;font-size:8.42px;color:#d6d6d6;font-family:'Liberation Mono',monospace;"><span style="color:#6cc36c">  </span></span><span class="t" style="left:72.75px;top:327.19px;font-size:8.42px;color:#bdbdbd;font-family:'Liberation Mono',monospace;">8</span><span class="t" style="left:90.30px;top:327.19px;font-size:8.42px;color:#d6d6d6;font-family:'Liberation Mono',monospace;"><span style="color:#6cc36c"> /</span></span><span class="t" style="left:72.75px;top:337.56px;font-size:8.42px;color:#bdbdbd;font-family:'Liberation Mono',monospace;">9</span><span class="t" style="left:67.70px;top:347.93px;font-size:8.42px;color:#bdbdbd;font-family:'Liberation Mono',monospace;">10</span><span class="t" style="left:90.30px;top:347.93px;font-size:8.42px;color:#d6d6d6;font-family:'Liberation Mono',monospace;"><span style="color:#6cc36c">/  Architecture and Entry Point  /</span></span><span class="t" style="left:67.70px;top:358.30px;font-size:8.42px;color:#bdbdbd;font-family:'Liberation Mono',monospace;">11</span><span class="t" style="left:67.70px;top:368.67px;font-size:8.42px;color:#bdbdbd;font-family:'Liberation Mono',monospace;">12</span><span class="t" style="left:90.30px;top:368.67px;font-size:8.42px;color:#d6d6d6;font-family:'Liberation Mono',monospace;"><span style="color:#ac8ae6">OUTPUT_ARCH</span><span style="color:#d6d6d6">( "riscv" )</span></span><span class="t" style="left:67.70px;top:379.04px;font-size:8.42px;color:#bdbdbd;font-family:'Liberation Mono',monospace;">13</span><span class="t" style="left:90.30px;top:379.04px;font-size:8.42px;color:#d6d6d6;font-family:'Liberation Mono',monospace;"><span style="color:#ac8ae6">ENTRY</span><span style="color:#d6d6d6">( _start )</span></span><span class="t" style="left:67.70px;top:389.41px;font-size:8.42px;color:#bdbdbd;font-family:'Liberation Mono',monospace;">14</span><span class="t" style="left:67.70px;top:399.78px;font-size:8.42px;color:#bdbdbd;font-family:'Liberation Mono',monospace;">15</span><span class="t" style="left:90.30px;top:399.78px;font-size:8.42px;color:#d6d6d6;font-family:'Liberation Mono',monospace;"><span style="color:#6cc36c">/  Define memory regions.  /</span></span><span class="t" style="left:67.70px;top:410.15px;font-size:8.42px;color:#bdbdbd;font-family:'Liberation Mono',monospace;">16</span><span class="t" style="left:90.30px;top:410.15px;font-size:8.42px;color:#d6d6d6;font-family:'Liberation Mono',monospace;"><span style="color:#d9977a">MEMORY</span></span><span class="t" style="left:67.70px;top:420.52px;font-size:8.42px;color:#bdbdbd;font-family:'Liberation Mono',monospace;">17</span><span class="t" style="left:90.30px;top:420.52px;font-size:8.42px;color:#d6d6d6;font-family:'Liberation Mono',monospace;"><span style="color:#d6d6d6">{</span></span><span class="t" style="left:67.70px;top:430.89px;font-size:8.42px;color:#bdbdbd;font-family:'Liberation Mono',monospace;">18</span><span class="t" style="left:90.30px;top:430.89px;font-size:8.42px;color:#d6d6d6;font-family:'Liberation Mono',monospace;"><span style="color:#d6d6d6">    FLASH (rxai!w): </span><span style="color:#ac8ae6">ORIGIN</span><span style="color:#d6d6d6"> = </span><span style="color:#5ec6d6">0x08000000</span><span style="color:#d6d6d6">, </span><span style="color:#ac8ae6">LENGTH</span><span style="color:#d6d6d6"> = </span><span style="color:#5ec6d6">128K</span></span><span class="t" style="left:67.70px;top:441.26px;font-size:8.42px;color:#bdbdbd;font-family:'Liberation Mono',monospace;">19</span><span class="t" style="left:90.30px;top:441.26px;font-size:8.42px;color:#d6d6d6;font-family:'Liberation Mono',monospace;"><span style="color:#d6d6d6">    RAM (wxa!ri): </span><span style="color:#ac8ae6">ORIGIN</span><span style="color:#d6d6d6"> = </span><span style="color:#5ec6d6">0x20000000</span><span style="color:#d6d6d6">, </span><span style="color:#ac8ae6">LENGTH</span><span style="color:#d6d6d6"> = </span><span style="color:#5ec6d6">32K</span></span><span class="t" style="left:67.70px;top:451.63px;font-size:8.42px;color:#bdbdbd;font-family:'Liberation Mono',monospace;">20</span><span class="t" style="left:67.70px;top:462.00px;font-size:8.42px;color:#bdbdbd;font-family:'Liberation Mono',monospace;">21</span><span class="t" style="left:90.30px;top:462.00px;font-size:8.42px;color:#d6d6d6;font-family:'Liberation Mono',monospace;"><span style="color:#d6d6d6">}</span></span><span class="t" style="left:67.70px;top:472.37px;font-size:8.42px;color:#bdbdbd;font-family:'Liberation Mono',monospace;">22</span><span class="t" style="left:67.70px;top:482.74px;font-size:8.42px;color:#bdbdbd;font-family:'Liberation Mono',monospace;">23</span><span class="t" style="left:67.70px;top:493.11px;font-size:8.42px;color:#bdbdbd;font-family:'Liberation Mono',monospace;">24</span><span class="t" style="left:90.30px;top:493.11px;font-size:8.42px;color:#d6d6d6;font-family:'Liberation Mono',monospace;"><span style="color:#d9977a">SECTIONS</span></span><span class="t" style="left:67.70px;top:503.48px;font-size:8.42px;color:#bdbdbd;font-family:'Liberation Mono',monospace;">25</span><span class="t" style="left:90.30px;top:503.48px;font-size:8.42px;color:#d6d6d6;font-family:'Liberation Mono',monospace;"><span style="color:#d6d6d6">{</span></span><span class="t" style="left:67.70px;top:513.85px;font-size:8.42px;color:#bdbdbd;font-family:'Liberation Mono',monospace;">26</span><span class="t" style="left:90.30px;top:513.85px;font-size:8.42px;color:#d6d6d6;font-family:'Liberation Mono',monospace;"><span style="color:#c4c0ee">    __stack_size</span><span style="color:#d6d6d6"> = </span><span style="color:#ac8ae6">DEFINED</span><span style="color:#d6d6d6">(</span><span style="color:#c4c0ee">__stack_size</span><span style="color:#d6d6d6">) ? </span><span style="color:#c4c0ee">__stack_size</span></span><span class="t" style="left:67.70px;top:524.22px;font-size:8.42px;color:#bdbdbd;font-family:'Liberation Mono',monospace;">27</span><span class="t" style="left:67.70px;top:534.59px;font-size:8.42px;color:#bdbdbd;font-family:'Liberation Mono',monospace;">28</span><span class="t" style="left:90.30px;top:534.59px;font-size:8.42px;color:#d6d6d6;font-family:'Liberation Mono',monospace;"><span style="color:#8c8c8c">    .init :</span></span><span class="t" style="left:67.70px;top:544.96px;font-size:8.42px;color:#bdbdbd;font-family:'Liberation Mono',monospace;">29</span><span class="t" style="left:90.30px;top:544.96px;font-size:8.42px;color:#d6d6d6;font-family:'Liberation Mono',monospace;"><span style="color:#d6d6d6">    {</span></span><span class="t" style="left:67.70px;top:555.33px;font-size:8.42px;color:#bdbdbd;font-family:'Liberation Mono',monospace;">30</span><span class="t" style="left:90.30px;top:555.33px;font-size:8.42px;color:#d6d6d6;font-family:'Liberation Mono',monospace;"><span style="color:#ac8ae6">        KEEP</span><span style="color:#d6d6d6"> ( (SORT_NONE(</span><span style="color:#8c8c8c">.init</span><span style="color:#d6d6d6">)))</span></span><span class="t" style="left:67.70px;top:565.70px;font-size:8.42px;color:#bdbdbd;font-family:'Liberation Mono',monospace;">31</span><span class="t" style="left:90.30px;top:565.70px;font-size:8.42px;color:#d6d6d6;font-family:'Liberation Mono',monospace;"><span style="color:#d6d6d6">    } &gt;FLASH AT&gt;FLASH</span></span><span class="t" style="left:67.70px;top:576.07px;font-size:8.42px;color:#bdbdbd;font-family:'Liberation Mono',monospace;">32</span><span class="t" style="left:67.70px;top:586.44px;font-size:8.42px;color:#bdbdbd;font-family:'Liberation Mono',monospace;">33</span><span class="t" style="left:90.30px;top:586.44px;font-size:8.42px;color:#d6d6d6;font-family:'Liberation Mono',monospace;"><span style="color:#8c8c8c">    .ilalign :</span></span><span class="t" style="left:67.70px;top:596.81px;font-size:8.42px;color:#bdbdbd;font-family:'Liberation Mono',monospace;">34</span><span class="t" style="left:90.30px;top:596.81px;font-size:8.42px;color:#d6d6d6;font-family:'Liberation Mono',monospace;"><span style="color:#d6d6d6">    {</span></span><span class="t" style="left:67.70px;top:607.18px;font-size:8.42px;color:#bdbdbd;font-family:'Liberation Mono',monospace;">35</span><span class="t" style="left:90.30px;top:607.18px;font-size:8.42px;color:#d6d6d6;font-family:'Liberation Mono',monospace;"><span style="color:#d6d6d6">        . = </span><span style="color:#ac8ae6">ALIGN</span><span style="color:#d6d6d6">(</span><span style="color:#5ec6d6">4</span><span style="color:#d6d6d6">);</span></span><span class="t" style="left:67.70px;top:617.55px;font-size:8.42px;color:#bdbdbd;font-family:'Liberation Mono',monospace;">36</span><span class="t" style="left:90.30px;top:617.55px;font-size:8.42px;color:#d6d6d6;font-family:'Liberation Mono',monospace;"><span style="color:#ac8ae6">        PROVIDE</span><span style="color:#d6d6d6">( _ilm_lma = . );</span></span><span class="t" style="left:67.70px;top:627.92px;font-size:8.42px;color:#bdbdbd;font-family:'Liberation Mono',monospace;">37</span><span class="t" style="left:90.30px;top:627.92px;font-size:8.42px;color:#d6d6d6;font-family:'Liberation Mono',monospace;"><span style="color:#d6d6d6">    } &gt;FLASH AT&gt;FLASH</span></span><span class="t" style="left:67.70px;top:638.29px;font-size:8.42px;color:#bdbdbd;font-family:'Liberation Mono',monospace;">38</span><span class="t" style="left:67.70px;top:648.66px;font-size:8.42px;color:#bdbdbd;font-family:'Liberation Mono',monospace;">39</span><span class="t" style="left:90.30px;top:648.66px;font-size:8.42px;color:#d6d6d6;font-family:'Liberation Mono',monospace;"><span style="color:#8c8c8c">    .ialign :</span></span><span class="t" style="left:67.70px;top:659.03px;font-size:8.42px;color:#bdbdbd;font-family:'Liberation Mono',monospace;">40</span><span class="t" style="left:90.30px;top:659.03px;font-size:8.42px;color:#d6d6d6;font-family:'Liberation Mono',monospace;"><span style="color:#d6d6d6">    {</span></span><span class="t" style="left:67.70px;top:669.40px;font-size:8.42px;color:#bdbdbd;font-family:'Liberation Mono',monospace;">41</span><span class="t" style="left:90.30px;top:669.40px;font-size:8.42px;color:#d6d6d6;font-family:'Liberation Mono',monospace;"><span style="color:#ac8ae6">        PROVIDE</span><span style="color:#d6d6d6">( _ilm = . );</span></span><span class="t" style="left:67.70px;top:679.77px;font-size:8.42px;color:#bdbdbd;font-family:'Liberation Mono',monospace;">42</span><span class="t" style="left:90.30px;top:679.77px;font-size:8.42px;color:#d6d6d6;font-family:'Liberation Mono',monospace;"><span style="color:#d6d6d6">    } &gt;FLASH AT&gt;FLASH</span></span><span class="t" style="left:67.70px;top:690.14px;font-size:8.42px;color:#bdbdbd;font-family:'Liberation Mono',monospace;">43</span><span class="t" style="left:67.70px;top:700.51px;font-size:8.42px;color:#bdbdbd;font-family:'Liberation Mono',monospace;">44</span><span class="t" style="left:90.30px;top:700.51px;font-size:8.42px;color:#d6d6d6;font-family:'Liberation Mono',monospace;"><span style="color:#6cc36c">    /  The program code and other data goes into FLASH</span></span><span class="t" style="left:67.70px;top:710.88px;font-size:8.42px;color:#bdbdbd;font-family:'Liberation Mono',monospace;">45</span><span class="t" style="left:90.30px;top:710.88px;font-size:8.42px;color:#d6d6d6;font-family:'Liberation Mono',monospace;"><span style="color:#8c8c8c">    .text :</span></span><svg class="a" style="left:0;top:0" width="370" height="718" viewBox="0 0 370 718"><path d="M97.55 255.70L98.17 257.15L99.74 257.29L98.55 258.32L98.90 259.86L97.55 259.05L96.20 259.86L96.55 258.32L95.36 257.29L96.93 257.15ZM92.50 266.07L93.12 267.52L94.69 267.66L93.50 268.69L93.85 270.23L92.50 269.42L91.15 270.23L91.50 268.69L90.31 267.66L91.88 267.52ZM97.55 266.07L98.17 267.52L99.74 267.66L98.55 268.69L98.90 270.23L97.55 269.42L96.20 270.23L96.55 268.69L95.36 267.66L96.93 267.52ZM102.60 266.07L103.22 267.52L104.79 267.66L103.60 268.69L103.95 270.23L102.60 269.42L101.25 270.23L101.60 268.69L100.41 267.66L101.98 267.52ZM107.65 266.07L108.27 267.52L109.84 267.66L108.65 268.69L109.00 270.23L107.65 269.42L106.30 270.23L106.65 268.69L105.46 267.66L107.03 267.52ZM112.70 266.07L113.32 267.52L114.89 267.66L113.70 268.69L114.05 270.23L112.70 269.42L111.35 270.23L111.70 268.69L110.51 267.66L112.08 267.52ZM117.75 266.07L118.37 267.52L119.94 267.66L118.75 268.69L119.10 270.23L117.75 269.42L116.40 270.23L116.75 268.69L115.56 267.66L117.13 267.52ZM122.80 266.07L123.42 267.52L124.99 267.66L123.80 268.69L124.15 270.23L122.80 269.42L121.45 270.23L121.80 268.69L120.61 267.66L122.18 267.52ZM127.85 266.07L128.47 267.52L130.04 267.66L128.85 268.69L129.20 270.23L127.85 269.42L126.50 270.23L126.85 268.69L125.66 267.66L127.23 267.52ZM132.90 266.07L133.52 267.52L135.09 267.66L133.90 268.69L134.25 270.23L132.90 269.42L131.55 270.23L131.90 268.69L130.71 267.66L132.28 267.52ZM137.95 266.07L138.57 267.52L140.14 267.66L138.95 268.69L139.30 270.23L137.95 269.42L136.60 270.23L136.95 268.69L135.76 267.66L137.33 267.52ZM143.00 266.07L143.62 267.52L145.19 267.66L144.00 268.69L144.35 270.23L143.00 269.42L141.65 270.23L142.00 268.69L140.81 267.66L142.38 267.52ZM148.05 266.07L148.67 267.52L150.24 267.66L149.05 268.69L149.40 270.23L148.05 269.42L146.70 270.23L147.05 268.69L145.86 267.66L147.43 267.52ZM153.10 266.07L153.72 267.52L155.29 267.66L154.10 268.69L154.45 270.23L153.10 269.42L151.75 270.23L152.10 268.69L150.91 267.66L152.48 267.52ZM158.15 266.07L158.77 267.52L160.34 267.66L159.15 268.69L159.50 270.23L158.15 269.42L156.80 270.23L157.15 268.69L155.96 267.66L157.53 267.52ZM163.20 266.07L163.82 267.52L165.39 267.66L164.20 268.69L164.55 270.23L163.20 269.42L161.85 270.23L162.20 268.69L161.01 267.66L162.58 267.52ZM168.25 266.07L168.87 267.52L170.44 267.66L169.25 268.69L169.60 270.23L168.25 269.42L166.90 270.23L167.25 268.69L166.06 267.66L167.63 267.52ZM173.30 266.07L173.92 267.52L175.49 267.66L174.30 268.69L174.65 270.23L173.30 269.42L171.95 270.23L172.30 268.69L171.11 267.66L172.68 267.52ZM178.35 266.07L178.97 267.52L180.54 267.66L179.35 268.69L179.70 270.23L178.35 269.42L177.00 270.23L177.35 268.69L176.16 267.66L177.73 267.52ZM183.40 266.07L184.02 267.52L185.59 267.66L184.40 268.69L184.75 270.23L183.40 269.42L182.05 270.23L182.40 268.69L181.21 267.66L182.78 267.52ZM188.45 266.07L189.07 267.52L190.64 267.66L189.45 268.69L189.80 270.23L188.45 269.42L187.10 270.23L187.45 268.69L186.26 267.66L187.83 267.52ZM193.50 266.07L194.12 267.52L195.69 267.66L194.50 268.69L194.85 270.23L193.50 269.42L192.15 270.23L192.50 268.69L191.31 267.66L192.88 267.52ZM198.55 266.07L199.17 267.52L200.74 267.66L199.55 268.69L199.90 270.23L198.55 269.42L197.20 270.23L197.55 268.69L196.36 267.66L197.93 267.52ZM203.60 266.07L204.22 267.52L205.79 267.66L204.60 268.69L204.95 270.23L203.60 269.42L202.25 270.23L202.60 268.69L201.41 267.66L202.98 267.52ZM208.65 266.07L209.27 267.52L210.84 267.66L209.65 268.69L210.00 270.23L208.65 269.42L207.30 270.23L207.65 268.69L206.46 267.66L208.03 267.52ZM213.70 266.07L214.32 267.52L215.89 267.66L214.70 268.69L215.05 270.23L213.70 269.42L212.35 270.23L212.70 268.69L211.51 267.66L213.08 267.52ZM218.75 266.07L219.37 267.52L220.94 267.66L219.75 268.69L220.10 270.23L218.75 269.42L217.40 270.23L217.75 268.69L216.56 267.66L218.13 267.52ZM223.80 266.07L224.42 267.52L225.99 267.66L224.80 268.69L225.15 270.23L223.80 269.42L222.45 270.23L222.80 268.69L221.61 267.66L223.18 267.52ZM228.85 266.07L229.47 267.52L231.04 267.66L229.85 268.69L230.20 270.23L228.85 269.42L227.50 270.23L227.85 268.69L226.66 267.66L228.23 267.52ZM233.90 266.07L234.52 267.52L236.09 267.66L234.90 268.69L235.25 270.23L233.90 269.42L232.55 270.23L232.90 268.69L231.71 267.66L233.28 267.52ZM238.95 266.07L239.57 267.52L241.14 267.66L239.95 268.69L240.30 270.23L238.95 269.42L237.60 270.23L237.95 268.69L236.76 267.66L238.33 267.52ZM244.00 266.07L244.62 267.52L246.19 267.66L245.00 268.69L245.35 270.23L244.00 269.42L242.65 270.23L243.00 268.69L241.81 267.66L243.38 267.52ZM249.05 266.07L249.67 267.52L251.24 267.66L250.05 268.69L250.40 270.23L249.05 269.42L247.70 270.23L248.05 268.69L246.86 267.66L248.43 267.52ZM254.10 266.07L254.72 267.52L256.29 267.66L255.10 268.69L255.45 270.23L254.10 269.42L252.75 270.23L253.10 268.69L251.91 267.66L253.48 267.52ZM259.15 266.07L259.77 267.52L261.34 267.66L260.15 268.69L260.50 270.23L259.15 269.42L257.80 270.23L258.15 268.69L256.96 267.66L258.53 267.52ZM264.20 266.07L264.82 267.52L266.39 267.66L265.20 268.69L265.55 270.23L264.20 269.42L262.85 270.23L263.20 268.69L262.01 267.66L263.58 267.52ZM269.25 266.07L269.87 267.52L271.44 267.66L270.25 268.69L270.60 270.23L269.25 269.42L267.90 270.23L268.25 268.69L267.06 267.66L268.63 267.52ZM274.30 266.07L274.92 267.52L276.49 267.66L275.30 268.69L275.65 270.23L274.30 269.42L272.95 270.23L273.30 268.69L272.11 267.66L273.68 267.52ZM279.35 266.07L279.97 267.52L281.54 267.66L280.35 268.69L280.70 270.23L279.35 269.42L278.00 270.23L278.35 268.69L277.16 267.66L278.73 267.52ZM284.40 266.07L285.02 267.52L286.59 267.66L285.40 268.69L285.75 270.23L284.40 269.42L283.05 270.23L283.40 268.69L282.21 267.66L283.78 267.52ZM289.45 266.07L290.07 267.52L291.64 267.66L290.45 268.69L290.80 270.23L289.45 269.42L288.10 270.23L288.45 268.69L287.26 267.66L288.83 267.52ZM294.50 266.07L295.12 267.52L296.69 267.66L295.50 268.69L295.85 270.23L294.50 269.42L293.15 270.23L293.50 268.69L292.31 267.66L293.88 267.52ZM299.55 266.07L300.17 267.52L301.74 267.66L300.55 268.69L300.90 270.23L299.55 269.42L298.20 270.23L298.55 268.69L297.36 267.66L298.93 267.52ZM304.60 266.07L305.22 267.52L306.79 267.66L305.60 268.69L305.95 270.23L304.60 269.42L303.25 270.23L303.60 268.69L302.41 267.66L303.98 267.52ZM309.65 266.07L310.27 267.52L311.84 267.66L310.65 268.69L311.00 270.23L309.65 269.42L308.30 270.23L308.65 268.69L307.46 267.66L309.03 267.52ZM314.70 266.07L315.32 267.52L316.89 267.66L315.70 268.69L316.05 270.23L314.70 269.42L313.35 270.23L313.70 268.69L312.51 267.66L314.08 267.52ZM319.75 266.07L320.37 267.52L321.94 267.66L320.75 268.69L321.10 270.23L319.75 269.42L318.40 270.23L318.75 268.69L317.56 267.66L319.13 267.52ZM324.80 266.07L325.42 267.52L326.99 267.66L325.80 268.69L326.15 270.23L324.80 269.42L323.45 270.23L323.80 268.69L322.61 267.66L324.18 267.52ZM329.85 266.07L330.47 267.52L332.04 267.66L330.85 268.69L331.20 270.23L329.85 269.42L328.50 270.23L328.85 268.69L327.66 267.66L329.23 267.52ZM334.90 266.07L335.52 267.52L337.09 267.66L335.90 268.69L336.25 270.23L334.90 269.42L333.55 270.23L333.90 268.69L332.71 267.66L334.28 267.52ZM339.95 266.07L340.57 267.52L342.14 267.66L340.95 268.69L341.30 270.23L339.95 269.42L338.60 270.23L338.95 268.69L337.76 267.66L339.33 267.52ZM345.00 266.07L345.62 267.52L347.19 267.66L346.00 268.69L346.35 270.23L345.00 269.42L343.65 270.23L344.00 268.69L342.81 267.66L344.38 267.52ZM350.05 266.07L350.67 267.52L352.24 267.66L351.05 268.69L351.40 270.23L350.05 269.42L348.70 270.23L349.05 268.69L347.86 267.66L349.43 267.52ZM355.10 266.07L355.72 267.52L357.29 267.66L356.10 268.69L356.45 270.23L355.10 269.42L353.75 270.23L354.10 268.69L352.91 267.66L354.48 267.52ZM360.15 266.07L360.77 267.52L362.34 267.66L361.15 268.69L361.50 270.23L360.15 269.42L358.80 270.23L359.15 268.69L357.96 267.66L359.53 267.52ZM365.20 266.07L365.82 267.52L367.39 267.66L366.20 268.69L366.55 270.23L365.20 269.42L363.85 270.23L364.20 268.69L363.01 267.66L364.58 267.52ZM92.50 276.44L93.12 277.89L94.69 278.03L93.50 279.06L93.85 280.60L92.50 279.79L91.15 280.60L91.50 279.06L90.31 278.03L91.88 277.89ZM97.55 276.44L98.17 277.89L99.74 278.03L98.55 279.06L98.90 280.60L97.55 279.79L96.20 280.60L96.55 279.06L95.36 278.03L96.93 277.89ZM92.50 286.81L93.12 288.26L94.69 288.40L93.50 289.43L93.85 290.97L92.50 290.16L91.15 290.97L91.50 289.43L90.31 288.40L91.88 288.26ZM97.55 286.81L98.17 288.26L99.74 288.40L98.55 289.43L98.90 290.97L97.55 290.16L96.20 290.97L96.55 289.43L95.36 288.40L96.93 288.26ZM92.50 297.18L93.12 298.63L94.69 298.77L93.50 299.80L93.85 301.34L92.50 300.53L91.15 301.34L91.50 299.80L90.31 298.77L91.88 298.63ZM97.55 297.18L98.17 298.63L99.74 298.77L98.55 299.80L98.90 301.34L97.55 300.53L96.20 301.34L96.55 299.80L95.36 298.77L96.93 298.63ZM92.50 307.55L93.12 309.00L94.69 309.14L93.50 310.17L93.85 311.71L92.50 310.90L91.15 311.71L91.50 310.17L90.31 309.14L91.88 309.00ZM97.55 307.55L98.17 309.00L99.74 309.14L98.55 310.17L98.90 311.71L97.55 310.90L96.20 311.71L96.55 310.17L95.36 309.14L96.93 309.00ZM102.60 307.55L103.22 309.00L104.79 309.14L103.60 310.17L103.95 311.71L102.60 310.90L101.25 311.71L101.60 310.17L100.41 309.14L101.98 309.00ZM107.65 307.55L108.27 309.00L109.84 309.14L108.65 310.17L109.00 311.71L107.65 310.90L106.30 311.71L106.65 310.17L105.46 309.14L107.03 309.00ZM112.70 307.55L113.32 309.00L114.89 309.14L113.70 310.17L114.05 311.71L112.70 310.90L111.35 311.71L111.70 310.17L110.51 309.14L112.08 309.00ZM117.75 307.55L118.37 309.00L119.94 309.14L118.75 310.17L119.10 311.71L117.75 310.90L116.40 311.71L116.75 310.17L115.56 309.14L117.13 309.00ZM122.80 307.55L123.42 309.00L124.99 309.14L123.80 310.17L124.15 311.71L122.80 310.90L121.45 311.71L121.80 310.17L120.61 309.14L122.18 309.00ZM127.85 307.55L128.47 309.00L130.04 309.14L128.85 310.17L129.20 311.71L127.85 310.90L126.50 311.71L126.85 310.17L125.66 309.14L127.23 309.00ZM132.90 307.55L133.52 309.00L135.09 309.14L133.90 310.17L134.25 311.71L132.90 310.90L131.55 311.71L131.90 310.17L130.71 309.14L132.28 309.00ZM137.95 307.55L138.57 309.00L140.14 309.14L138.95 310.17L139.30 311.71L137.95 310.90L136.60 311.71L136.95 310.17L135.76 309.14L137.33 309.00ZM143.00 307.55L143.62 309.00L145.19 309.14L144.00 310.17L144.35 311.71L143.00 310.90L141.65 311.71L142.00 310.17L140.81 309.14L142.38 309.00ZM148.05 307.55L148.67 309.00L150.24 309.14L149.05 310.17L149.40 311.71L148.05 310.90L146.70 311.71L147.05 310.17L145.86 309.14L147.43 309.00ZM153.10 307.55L153.72 309.00L155.29 309.14L154.10 310.17L154.45 311.71L153.10 310.90L151.75 311.71L152.10 310.17L150.91 309.14L152.48 309.00ZM158.15 307.55L158.77 309.00L160.34 309.14L159.15 310.17L159.50 311.71L158.15 310.90L156.80 311.71L157.15 310.17L155.96 309.14L157.53 309.00ZM163.20 307.55L163.82 309.00L165.39 309.14L164.20 310.17L164.55 311.71L163.20 310.90L161.85 311.71L162.20 310.17L161.01 309.14L162.58 309.00ZM168.25 307.55L168.87 309.00L170.44 309.14L169.25 310.17L169.60 311.71L168.25 310.90L166.90 311.71L167.25 310.17L166.06 309.14L167.63 309.00ZM173.30 307.55L173.92 309.00L175.49 309.14L174.30 310.17L174.65 311.71L173.30 310.90L171.95 311.71L172.30 310.17L171.11 309.14L172.68 309.00ZM178.35 307.55L178.97 309.00L180.54 309.14L179.35 310.17L179.70 311.71L178.35 310.90L177.00 311.71L177.35 310.17L176.16 309.14L177.73 309.00ZM183.40 307.55L184.02 309.00L185.59 309.14L184.40 310.17L184.75 311.71L183.40 310.90L182.05 311.71L182.40 310.17L181.21 309.14L182.78 309.00ZM188.45 307.55L189.07 309.00L190.64 309.14L189.45 310.17L189.80 311.71L188.45 310.90L187.10 311.71L187.45 310.17L186.26 309.14L187.83 309.00ZM193.50 307.55L194.12 309.00L195.69 309.14L194.50 310.17L194.85 311.71L193.50 310.90L192.15 311.71L192.50 310.17L191.31 309.14L192.88 309.00ZM198.55 307.55L199.17 309.00L200.74 309.14L199.55 310.17L199.90 311.71L198.55 310.90L197.20 311.71L197.55 310.17L196.36 309.14L197.93 309.00ZM203.60 307.55L204.22 309.00L205.79 309.14L204.60 310.17L204.95 311.71L203.60 310.90L202.25 311.71L202.60 310.17L201.41 309.14L202.98 309.00ZM208.65 307.55L209.27 309.00L210.84 309.14L209.65 310.17L210.00 311.71L208.65 310.90L207.30 311.71L207.65 310.17L206.46 309.14L208.03 309.00ZM213.70 307.55L214.32 309.00L215.89 309.14L214.70 310.17L215.05 311.71L213.70 310.90L212.35 311.71L212.70 310.17L211.51 309.14L213.08 309.00ZM218.75 307.55L219.37 309.00L220.94 309.14L219.75 310.17L220.10 311.71L218.75 310.90L217.40 311.71L217.75 310.17L216.56 309.14L218.13 309.00ZM223.80 307.55L224.42 309.00L225.99 309.14L224.80 310.17L225.15 311.71L223.80 310.90L222.45 311.71L222.80 310.17L221.61 309.14L223.18 309.00ZM228.85 307.55L229.47 309.00L231.04 309.14L229.85 310.17L230.20 311.71L228.85 310.90L227.50 311.71L227.85 310.17L226.66 309.14L228.23 309.00ZM233.90 307.55L234.52 309.00L236.09 309.14L234.90 310.17L235.25 311.71L233.90 310.90L232.55 311.71L232.90 310.17L231.71 309.14L233.28 309.00ZM238.95 307.55L239.57 309.00L241.14 309.14L239.95 310.17L240.30 311.71L238.95 310.90L237.60 311.71L237.95 310.17L236.76 309.14L238.33 309.00ZM244.00 307.55L244.62 309.00L246.19 309.14L245.00 310.17L245.35 311.71L244.00 310.90L242.65 311.71L243.00 310.17L241.81 309.14L243.38 309.00ZM249.05 307.55L249.67 309.00L251.24 309.14L250.05 310.17L250.40 311.71L249.05 310.90L247.70 311.71L248.05 310.17L246.86 309.14L248.43 309.00ZM254.10 307.55L254.72 309.00L256.29 309.14L255.10 310.17L255.45 311.71L254.10 310.90L252.75 311.71L253.10 310.17L251.91 309.14L253.48 309.00ZM259.15 307.55L259.77 309.00L261.34 309.14L260.15 310.17L260.50 311.71L259.15 310.90L257.80 311.71L258.15 310.17L256.96 309.14L258.53 309.00ZM264.20 307.55L264.82 309.00L266.39 309.14L265.20 310.17L265.55 311.71L264.20 310.90L262.85 311.71L263.20 310.17L262.01 309.14L263.58 309.00ZM269.25 307.55L269.87 309.00L271.44 309.14L270.25 310.17L270.60 311.71L269.25 310.90L267.90 311.71L268.25 310.17L267.06 309.14L268.63 309.00ZM274.30 307.55L274.92 309.00L276.49 309.14L275.30 310.17L275.65 311.71L274.30 310.90L272.95 311.71L273.30 310.17L272.11 309.14L273.68 309.00ZM279.35 307.55L279.97 309.00L281.54 309.14L280.35 310.17L280.70 311.71L279.35 310.90L278.00 311.71L278.35 310.17L277.16 309.14L278.73 309.00ZM284.40 307.55L285.02 309.00L286.59 309.14L285.40 310.17L285.75 311.71L284.40 310.90L283.05 311.71L283.40 310.17L282.21 309.14L283.78 309.00ZM289.45 307.55L290.07 309.00L291.64 309.14L290.45 310.17L290.80 311.71L289.45 310.90L288.10 311.71L288.45 310.17L287.26 309.14L288.83 309.00ZM294.50 307.55L295.12 309.00L296.69 309.14L295.50 310.17L295.85 311.71L294.50 310.90L293.15 311.71L293.50 310.17L292.31 309.14L293.88 309.00ZM299.55 307.55L300.17 309.00L301.74 309.14L300.55 310.17L300.90 311.71L299.55 310.90L298.20 311.71L298.55 310.17L297.36 309.14L298.93 309.00ZM304.60 307.55L305.22 309.00L306.79 309.14L305.60 310.17L305.95 311.71L304.60 310.90L303.25 311.71L303.60 310.17L302.41 309.14L303.98 309.00ZM309.65 307.55L310.27 309.00L311.84 309.14L310.65 310.17L311.00 311.71L309.65 310.90L308.30 311.71L308.65 310.17L307.46 309.14L309.03 309.00ZM314.70 307.55L315.32 309.00L316.89 309.14L315.70 310.17L316.05 311.71L314.70 310.90L313.35 311.71L313.70 310.17L312.51 309.14L314.08 309.00ZM319.75 307.55L320.37 309.00L321.94 309.14L320.75 310.17L321.10 311.71L319.75 310.90L318.40 311.71L318.75 310.17L317.56 309.14L319.13 309.00ZM324.80 307.55L325.42 309.00L326.99 309.14L325.80 310.17L326.15 311.71L324.80 310.90L323.45 311.71L323.80 310.17L322.61 309.14L324.18 309.00ZM329.85 307.55L330.47 309.00L332.04 309.14L330.85 310.17L331.20 311.71L329.85 310.90L328.50 311.71L328.85 310.17L327.66 309.14L329.23 309.00ZM334.90 307.55L335.52 309.00L337.09 309.14L335.90 310.17L336.25 311.71L334.90 310.90L333.55 311.71L333.90 310.17L332.71 309.14L334.28 309.00ZM339.95 307.55L340.57 309.00L342.14 309.14L340.95 310.17L341.30 311.71L339.95 310.90L338.60 311.71L338.95 310.17L337.76 309.14L339.33 309.00ZM345.00 307.55L345.62 309.00L347.19 309.14L346.00 310.17L346.35 311.71L345.00 310.90L343.65 311.71L344.00 310.17L342.81 309.14L344.38 309.00ZM350.05 307.55L350.67 309.00L352.24 309.14L351.05 310.17L351.40 311.71L350.05 310.90L348.70 311.71L349.05 310.17L347.86 309.14L349.43 309.00ZM355.10 307.55L355.72 309.00L357.29 309.14L356.10 310.17L356.45 311.71L355.10 310.90L353.75 311.71L354.10 310.17L352.91 309.14L354.48 309.00ZM360.15 307.55L360.77 309.00L362.34 309.14L361.15 310.17L361.50 311.71L360.15 310.90L358.80 311.71L359.15 310.17L357.96 309.14L359.53 309.00ZM365.20 307.55L365.82 309.00L367.39 309.14L366.20 310.17L366.55 311.71L365.20 310.90L363.85 311.71L364.20 310.17L363.01 309.14L364.58 309.00ZM92.50 317.92L93.12 319.37L94.69 319.51L93.50 320.54L93.85 322.08L92.50 321.27L91.15 322.08L91.50 320.54L90.31 319.51L91.88 319.37ZM97.55 317.92L98.17 319.37L99.74 319.51L98.55 320.54L98.90 322.08L97.55 321.27L96.20 322.08L96.55 320.54L95.36 319.51L96.93 319.37ZM92.50 328.29L93.12 329.74L94.69 329.88L93.50 330.91L93.85 332.45L92.50 331.64L91.15 332.45L91.50 330.91L90.31 329.88L91.88 329.74ZM97.55 349.03L98.17 350.48L99.74 350.62L98.55 351.65L98.90 353.19L97.55 352.38L96.20 353.19L96.55 351.65L95.36 350.62L96.93 350.48ZM254.10 349.03L254.72 350.48L256.29 350.62L255.10 351.65L255.45 353.19L254.10 352.38L252.75 353.19L253.10 351.65L251.91 350.62L253.48 350.48ZM97.55 400.88L98.17 402.33L99.74 402.47L98.55 403.50L98.90 405.04L97.55 404.23L96.20 405.04L96.55 403.50L95.36 402.47L96.93 402.33ZM223.80 400.88L224.42 402.33L225.99 402.47L224.80 403.50L225.15 405.04L223.80 404.23L222.45 405.04L222.80 403.50L221.61 402.47L223.18 402.33ZM117.75 701.61L118.37 703.06L119.94 703.20L118.75 704.23L119.10 705.77L117.75 704.96L116.40 705.77L116.75 704.23L115.56 703.20L117.13 703.06Z" fill="#6cc36c"/><path d="M163.20 556.43L163.82 557.88L165.39 558.02L164.20 559.05L164.55 560.59L163.20 559.78L161.85 560.59L162.20 559.05L161.01 558.02L162.58 557.88Z" fill="#d6d6d6"/></svg><div class="a" style="left:145.25px;top:511.75px;width:1px;height:10.8px;background:#d0d0d0;"></div><div class="a" style="left:370px;top:253px;width:10px;height:465px;background:#262626;"></div><div class="a" style="left:370px;top:342px;width:10px;height:376px;background:#404040;"></div><div class="a" style="left:59px;top:718px;width:321px;height:9px;background:#262626;"></div><div class="a" style="left:126px;top:718px;width:244px;height:9px;background:#444444;"></div><div class="a" style="left:370px;top:718px;width:10px;height:9px;background:#2a2a2a;"></div><svg class="a" style="left:271px;top:234px" width="554" height="18" viewBox="0 0 554 18"><rect width="554" height="18" fill="#2a2a2a"/><path d="M-43.40 -34.30L-30.50 -34.30L-25.80 -24.50L-12.90 -24.50L-8.20 -34.30M-25.80 -24.50L-30.50 -14.70M-12.90 -24.50L-8.20 -14.70M-8.20 -34.30L4.70 -34.30L9.40 -24.50L22.30 -24.50L27.00 -34.30M9.40 -24.50L4.70 -14.70M22.30 -24.50L27.00 -14.70M27.00 -34.30L39.90 -34.30L44.60 -24.50L57.50 -24.50L62.20 -34.30M44.60 -24.50L39.90 -14.70M57.50 -24.50L62.20 -14.70M62.20 -34.30L75.10 -34.30L79.80 -24.50L92.70 -24.50L97.40 -34.30M79.80 -24.50L75.10 -14.70M92.70 -24.50L97.40 -14.70M97.40 -34.30L110.30 -34.30L115.00 -24.50L127.90 -24.50L132.60 -34.30M115.00 -24.50L110.30 -14.70M127.90 -24.50L132.60 -14.70M132.60 -34.30L145.50 -34.30L150.20 -24.50L163.10 -24.50L167.80 -34.30M150.20 -24.50L145.50 -14.70M163.10 -24.50L167.80 -14.70M167.80 -34.30L180.70 -34.30L185.40 -24.50L198.30 -24.50L203.00 -34.30M185.40 -24.50L180.70 -14.70M198.30 -24.50L203.00 -14.70M203.00 -34.30L215.90 -34.30L220.60 -24.50L233.50 -24.50L238.20 -34.30M220.60 -24.50L215.90 -14.70M233.50 -24.50L238.20 -14.70M238.20 -34.30L251.10 -34.30L255.80 -24.50L268.70 -24.50L273.40 -34.30M255.80 -24.50L251.10 -14.70M268.70 -24.50L273.40 -14.70M273.40 -34.30L286.30 -34.30L291.00 -24.50L303.90 -24.50L308.60 -34.30M291.00 -24.50L286.30 -14.70M303.90 -24.50L308.60 -14.70M308.60 -34.30L321.50 -34.30L326.20 -24.50L339.10 -24.50L343.80 -34.30M326.20 -24.50L321.50 -14.70M339.10 -24.50L343.80 -14.70M343.80 -34.30L356.70 -34.30L361.40 -24.50L374.30 -24.50L379.00 -34.30M361.40 -24.50L356.70 -14.70M374.30 -24.50L379.00 -14.70M379.00 -34.30L391.90 -34.30L396.60 -24.50L409.50 -24.50L414.20 -34.30M396.60 -24.50L391.90 -14.70M409.50 -24.50L414.20 -14.70M414.20 -34.30L427.10 -34.30L431.80 -24.50L444.70 -24.50L449.40 -34.30M431.80 -24.50L427.10 -14.70M444.70 -24.50L449.40 -14.70M449.40 -34.30L462.30 -34.30L467.00 -24.50L479.90 -24.50L484.60 -34.30M467.00 -24.50L462.30 -14.70M479.90 -24.50L484.60 -14.70M484.60 -34.30L497.50 -34.30L502.20 -24.50L515.10 -24.50L519.80 -34.30M502.20 -24.50L497.50 -14.70M515.10 -24.50L519.80 -14.70M519.80 -34.30L532.70 -34.30L537.40 -24.50L550.30 -24.50L555.00 -34.30M537.40 -24.50L532.70 -14.70M550.30 -24.50L555.00 -14.70M555.00 -34.30L567.90 -34.30L572.60 -24.50L585.50 -24.50L590.20 -34.30M572.60 -24.50L567.90 -14.70M585.50 -24.50L590.20 -14.70M-43.40 -14.70L-30.50 -14.70L-25.80 -4.90L-12.90 -4.90L-8.20 -14.70M-25.80 -4.90L-30.50 4.90M-12.90 -4.90L-8.20 4.90M-8.20 -14.70L4.70 -14.70L9.40 -4.90L22.30 -4.90L27.00 -14.70M9.40 -4.90L4.70 4.90M22.30 -4.90L27.00 4.90M27.00 -14.70L39.90 -14.70L44.60 -4.90L57.50 -4.90L62.20 -14.70M44.60 -4.90L39.90 4.90M57.50 -4.90L62.20 4.90M62.20 -14.70L75.10 -14.70L79.80 -4.90L92.70 -4.90L97.40 -14.70M79.80 -4.90L75.10 4.90M92.70 -4.90L97.40 4.90M97.40 -14.70L110.30 -14.70L115.00 -4.90L127.90 -4.90L132.60 -14.70M115.00 -4.90L110.30 4.90M127.90 -4.90L132.60 4.90M132.60 -14.70L145.50 -14.70L150.20 -4.90L163.10 -4.90L167.80 -14.70M150.20 -4.90L145.50 4.90M163.10 -4.90L167.80 4.90M167.80 -14.70L180.70 -14.70L185.40 -4.90L198.30 -4.90L203.00 -14.70M185.40 -4.90L180.70 4.90M198.30 -4.90L203.00 4.90M203.00 -14.70L215.90 -14.70L220.60 -4.90L233.50 -4.90L238.20 -14.70M220.60 -4.90L215.90 4.90M233.50 -4.90L238.20 4.90M238.20 -14.70L251.10 -14.70L255.80 -4.90L268.70 -4.90L273.40 -14.70M255.80 -4.90L251.10 4.90M268.70 -4.90L273.40 4.90M273.40 -14.70L286.30 -14.70L291.00 -4.90L303.90 -4.90L308.60 -14.70M291.00 -4.90L286.30 4.90M303.90 -4.90L308.60 4.90M308.60 -14.70L321.50 -14.70L326.20 -4.90L339.10 -4.90L343.80 -14.70M326.20 -4.90L321.50 4.90M339.10 -4.90L343.80 4.90M343.80 -14.70L356.70 -14.70L361.40 -4.90L374.30 -4.90L379.00 -14.70M361.40 -4.90L356.70 4.90M374.30 -4.90L379.00 4.90M379.00 -14.70L391.90 -14.70L396.60 -4.90L409.50 -4.90L414.20 -14.70M396.60 -4.90L391.90 4.90M409.50 -4.90L414.20 4.90M414.20 -14.70L427.10 -14.70L431.80 -4.90L444.70 -4.90L449.40 -14.70M431.80 -4.90L427.10 4.90M444.70 -4.90L449.40 4.90M449.40 -14.70L462.30 -14.70L467.00 -4.90L479.90 -4.90L484.60 -14.70M467.00 -4.90L462.30 4.90M479.90 -4.90L484.60 4.90M484.60 -14.70L497.50 -14.70L502.20 -4.90L515.10 -4.90L519.80 -14.70M502.20 -4.90L497.50 4.90M515.10 -4.90L519.80 4.90M519.80 -14.70L532.70 -14.70L537.40 -4.90L550.30 -4.90L555.00 -14.70M537.40 -4.90L532.70 4.90M550.30 -4.90L555.00 4.90M555.00 -14.70L567.90 -14.70L572.60 -4.90L585.50 -4.90L590.20 -14.70M572.60 -4.90L567.90 4.90M585.50 -4.90L590.20 4.90M-43.40 4.90L-30.50 4.90L-25.80 14.70L-12.90 14.70L-8.20 4.90M-25.80 14.70L-30.50 24.50M-12.90 14.70L-8.20 24.50M-8.20 4.90L4.70 4.90L9.40 14.70L22.30 14.70L27.00 4.90M9.40 14.70L4.70 24.50M22.30 14.70L27.00 24.50M27.00 4.90L39.90 4.90L44.60 14.70L57.50 14.70L62.20 4.90M44.60 14.70L39.90 24.50M57.50 14.70L62.20 24.50M62.20 4.90L75.10 4.90L79.80 14.70L92.70 14.70L97.40 4.90M79.80 14.70L75.10 24.50M92.70 14.70L97.40 24.50M97.40 4.90L110.30 4.90L115.00 14.70L127.90 14.70L132.60 4.90M115.00 14.70L110.30 24.50M127.90 14.70L132.60 24.50M132.60 4.90L145.50 4.90L150.20 14.70L163.10 14.70L167.80 4.90M150.20 14.70L145.50 24.50M163.10 14.70L167.80 24.50M167.80 4.90L180.70 4.90L185.40 14.70L198.30 14.70L203.00 4.90M185.40 14.70L180.70 24.50M198.30 14.70L203.00 24.50M203.00 4.90L215.90 4.90L220.60 14.70L233.50 14.70L238.20 4.90M220.60 14.70L215.90 24.50M233.50 14.70L238.20 24.50M238.20 4.90L251.10 4.90L255.80 14.70L268.70 14.70L273.40 4.90M255.80 14.70L251.10 24.50M268.70 14.70L273.40 24.50M273.40 4.90L286.30 4.90L291.00 14.70L303.90 14.70L308.60 4.90M291.00 14.70L286.30 24.50M303.90 14.70L308.60 24.50M308.60 4.90L321.50 4.90L326.20 14.70L339.10 14.70L343.80 4.90M326.20 14.70L321.50 24.50M339.10 14.70L343.80 24.50M343.80 4.90L356.70 4.90L361.40 14.70L374.30 14.70L379.00 4.90M361.40 14.70L356.70 24.50M374.30 14.70L379.00 24.50M379.00 4.90L391.90 4.90L396.60 14.70L409.50 14.70L414.20 4.90M396.60 14.70L391.90 24.50M409.50 14.70L414.20 24.50M414.20 4.90L427.10 4.90L431.80 14.70L444.70 14.70L449.40 4.90M431.80 14.70L427.10 24.50M444.70 14.70L449.40 24.50M449.40 4.90L462.30 4.90L467.00 14.70L479.90 14.70L484.60 4.90M467.00 14.70L462.30 24.50M479.90 14.70L484.60 24.50M484.60 4.90L497.50 4.90L502.20 14.70L515.10 14.70L519.80 4.90M502.20 14.70L497.50 24.50M515.10 14.70L519.80 24.50M519.80 4.90L532.70 4.90L537.40 14.70L550.30 14.70L555.00 4.90M537.40 14.70L532.70 24.50M550.30 14.70L555.00 24.50M555.00 4.90L567.90 4.90L572.60 14.70L585.50 14.70L590.20 4.90M572.60 14.70L567.90 24.50M585.50 14.70L590.20 24.50M-43.40 24.50L-30.50 24.50L-25.80 34.30L-12.90 34.30L-8.20 24.50M-25.80 34.30L-30.50 44.10M-12.90 34.30L-8.20 44.10M-8.20 24.50L4.70 24.50L9.40 34.30L22.30 34.30L27.00 24.50M9.40 34.30L4.70 44.10M22.30 34.30L27.00 44.10M27.00 24.50L39.90 24.50L44.60 34.30L57.50 34.30L62.20 24.50M44.60 34.30L39.90 44.10M57.50 34.30L62.20 44.10M62.20 24.50L75.10 24.50L79.80 34.30L92.70 34.30L97.40 24.50M79.80 34.30L75.10 44.10M92.70 34.30L97.40 44.10M97.40 24.50L110.30 24.50L115.00 34.30L127.90 34.30L132.60 24.50M115.00 34.30L110.30 44.10M127.90 34.30L132.60 44.10M132.60 24.50L145.50 24.50L150.20 34.30L163.10 34.30L167.80 24.50M150.20 34.30L145.50 44.10M163.10 34.30L167.80 44.10M167.80 24.50L180.70 24.50L185.40 34.30L198.30 34.30L203.00 24.50M185.40 34.30L180.70 44.10M198.30 34.30L203.00 44.10M203.00 24.50L215.90 24.50L220.60 34.30L233.50 34.30L238.20 24.50M220.60 34.30L215.90 44.10M233.50 34.30L238.20 44.10M238.20 24.50L251.10 24.50L255.80 34.30L268.70 34.30L273.40 24.50M255.80 34.30L251.10 44.10M268.70 34.30L273.40 44.10M273.40 24.50L286.30 24.50L291.00 34.30L303.90 34.30L308.60 24.50M291.00 34.30L286.30 44.10M303.90 34.30L308.60 44.10M308.60 24.50L321.50 24.50L326.20 34.30L339.10 34.30L343.80 24.50M326.20 34.30L321.50 44.10M339.10 34.30L343.80 44.10M343.80 24.50L356.70 24.50L361.40 34.30L374.30 34.30L379.00 24.50M361.40 34.30L356.70 44.10M374.30 34.30L379.00 44.10M379.00 24.50L391.90 24.50L396.60 34.30L409.50 34.30L414.20 24.50M396.60 34.30L391.90 44.10M409.50 34.30L414.20 44.10M414.20 24.50L427.10 24.50L431.80 34.30L444.70 34.30L449.40 24.50M431.80 34.30L427.10 44.10M444.70 34.30L449.40 44.10M449.40 24.50L462.30 24.50L467.00 34.30L479.90 34.30L484.60 24.50M467.00 34.30L462.30 44.10M479.90 34.30L484.60 44.10M484.60 24.50L497.50 24.50L502.20 34.30L515.10 34.30L519.80 24.50M502.20 34.30L497.50 44.10M515.10 34.30L519.80 44.10M519.80 24.50L532.70 24.50L537.40 34.30L550.30 34.30L555.00 24.50M537.40 34.30L532.70 44.10M550.30 34.30L555.00 44.10M555.00 24.50L567.90 24.50L572.60 34.30L585.50 34.30L590.20 24.50M572.60 34.30L567.90 44.10M585.50 34.30L590.20 44.10M-43.40 44.10L-30.50 44.10L-25.80 53.90L-12.90 53.90L-8.20 44.10M-25.80 53.90L-30.50 63.70M-12.90 53.90L-8.20 63.70M-8.20 44.10L4.70 44.10L9.40 53.90L22.30 53.90L27.00 44.10M9.40 53.90L4.70 63.70M22.30 53.90L27.00 63.70M27.00 44.10L39.90 44.10L44.60 53.90L57.50 53.90L62.20 44.10M44.60 53.90L39.90 63.70M57.50 53.90L62.20 63.70M62.20 44.10L75.10 44.10L79.80 53.90L92.70 53.90L97.40 44.10M79.80 53.90L75.10 63.70M92.70 53.90L97.40 63.70M97.40 44.10L110.30 44.10L115.00 53.90L127.90 53.90L132.60 44.10M115.00 53.90L110.30 63.70M127.90 53.90L132.60 63.70M132.60 44.10L145.50 44.10L150.20 53.90L163.10 53.90L167.80 44.10M150.20 53.90L145.50 63.70M163.10 53.90L167.80 63.70M167.80 44.10L180.70 44.10L185.40 53.90L198.30 53.90L203.00 44.10M185.40 53.90L180.70 63.70M198.30 53.90L203.00 63.70M203.00 44.10L215.90 44.10L220.60 53.90L233.50 53.90L238.20 44.10M220.60 53.90L215.90 63.70M233.50 53.90L238.20 63.70M238.20 44.10L251.10 44.10L255.80 53.90L268.70 53.90L273.40 44.10M255.80 53.90L251.10 63.70M268.70 53.90L273.40 63.70M273.40 44.10L286.30 44.10L291.00 53.90L303.90 53.90L308.60 44.10M291.00 53.90L286.30 63.70M303.90 53.90L308.60 63.70M308.60 44.10L321.50 44.10L326.20 53.90L339.10 53.90L343.80 44.10M326.20 53.90L321.50 63.70M339.10 53.90L343.80 63.70M343.80 44.10L356.70 44.10L361.40 53.90L374.30 53.90L379.00 44.10M361.40 53.90L356.70 63.70M374.30 53.90L379.00 63.70M379.00 44.10L391.90 44.10L396.60 53.90L409.50 53.90L414.20 44.10M396.60 53.90L391.90 63.70M409.50 53.90L414.20 63.70M414.20 44.10L427.10 44.10L431.80 53.90L444.70 53.90L449.40 44.10M431.80 53.90L427.10 63.70M444.70 53.90L449.40 63.70M449.40 44.10L462.30 44.10L467.00 53.90L479.90 53.90L484.60 44.10M467.00 53.90L462.30 63.70M479.90 53.90L484.60 63.70M484.60 44.10L497.50 44.10L502.20 53.90L515.10 53.90L519.80 44.10M502.20 53.90L497.50 63.70M515.10 53.90L519.80 63.70M519.80 44.10L532.70 44.10L537.40 53.90L550.30 53.90L555.00 44.10M537.40 53.90L532.70 63.70M550.30 53.90L555.00 63.70M555.00 44.10L567.90 44.10L572.60 53.90L585.50 53.90L590.20 44.10M572.60 53.90L567.90 63.70M585.50 53.90L590.20 63.70" stroke="#575757" stroke-width="1.6" fill="none"/></svg><div class="a" style="left:59px;top:234px;width:83px;height:18px;background:#222222;"></div><div class="a" style="left:59px;top:234px;width:83px;height:1px;background:#363636;"></div><div class="a" style="left:142px;top:234px;width:129.3px;height:18px;background:#5a5a5a;"></div><svg class="a" style="left:65.5px;top:237.5px" width="12" height="12.5" viewBox="0 0 12 12.5"><path d="M1.2 0.5 L7.5 0.5 L10.5 3.5 L10.5 11 Q10.5 11.8 9.7 11.8 L2 11.8 Q1.2 11.8 1.2 11 Z" fill="#eeeeea"/><path d="M7.5 0.5 L7.5 3.5 L10.5 3.5 Z" fill="#c4c4bc"/><text x="5.8" y="9.4" font-size="6" text-anchor="middle" fill="#777" font-family="Liberation Sans">.c</text></svg><span class="t" style="left:83.30px;top:239.92px;font-size:8.4px;color:#eeeeee;font-family:'Liberation Mono',monospace;font-weight:bold;">main.c</span><svg class="a" style="left:124px;top:238.4px" width="10.5" height="10.5" viewBox="0 0 10.5 10.5"><path d="M0.8 0.8 L9.7 9.7 M9.7 0.8 L0.8 9.7" stroke="#f2f2f2" stroke-width="1.5"/></svg><svg class="a" style="left:148.2px;top:237.5px" width="12" height="12.5" viewBox="0 0 12 12.5"><path d="M1.2 0.5 L7.5 0.5 L10.5 3.5 L10.5 11 Q10.5 11.8 9.7 11.8 L2 11.8 Q1.2 11.8 1.2 11 Z" fill="#eeeeea"/><path d="M7.5 0.5 L7.5 3.5 L10.5 3.5 Z" fill="#c4c4bc"/><text x="5.8" y="9.4" font-size="6" text-anchor="middle" fill="#777" font-family="Liberation Sans">.ld</text></svg><span class="t" style="left:166.80px;top:239.92px;font-size:8.4px;color:#f4f4f4;font-family:'Liberation Mono',monospace;font-weight:bold;">linkerscript.ld</span><svg class="a" style="left:254px;top:238.4px" width="10.5" height="10.5" viewBox="0 0 10.5 10.5"><path d="M0.8 0.8 L9.7 9.7 M9.7 0.8 L0.8 9.7" stroke="#f2f2f2" stroke-width="1.5"/></svg><svg class="a" style="left:381px;top:558.5px" width="444" height="20.5" viewBox="0 0 444 20.5"><rect width="444" height="20.5" fill="#2a2a2a"/><path d="M-47.00 -39.60L-34.10 -39.60L-29.40 -29.20L-16.50 -29.20L-11.80 -39.60M-29.40 -29.20L-34.10 -18.80M-16.50 -29.20L-11.80 -18.80M-11.80 -39.60L1.10 -39.60L5.80 -29.20L18.70 -29.20L23.40 -39.60M5.80 -29.20L1.10 -18.80M18.70 -29.20L23.40 -18.80M23.40 -39.60L36.30 -39.60L41.00 -29.20L53.90 -29.20L58.60 -39.60M41.00 -29.20L36.30 -18.80M53.90 -29.20L58.60 -18.80M58.60 -39.60L71.50 -39.60L76.20 -29.20L89.10 -29.20L93.80 -39.60M76.20 -29.20L71.50 -18.80M89.10 -29.20L93.80 -18.80M93.80 -39.60L106.70 -39.60L111.40 -29.20L124.30 -29.20L129.00 -39.60M111.40 -29.20L106.70 -18.80M124.30 -29.20L129.00 -18.80M129.00 -39.60L141.90 -39.60L146.60 -29.20L159.50 -29.20L164.20 -39.60M146.60 -29.20L141.90 -18.80M159.50 -29.20L164.20 -18.80M164.20 -39.60L177.10 -39.60L181.80 -29.20L194.70 -29.20L199.40 -39.60M181.80 -29.20L177.10 -18.80M194.70 -29.20L199.40 -18.80M199.40 -39.60L212.30 -39.60L217.00 -29.20L229.90 -29.20L234.60 -39.60M217.00 -29.20L212.30 -18.80M229.90 -29.20L234.60 -18.80M234.60 -39.60L247.50 -39.60L252.20 -29.20L265.10 -29.20L269.80 -39.60M252.20 -29.20L247.50 -18.80M265.10 -29.20L269.80 -18.80M269.80 -39.60L282.70 -39.60L287.40 -29.20L300.30 -29.20L305.00 -39.60M287.40 -29.20L282.70 -18.80M300.30 -29.20L305.00 -18.80M305.00 -39.60L317.90 -39.60L322.60 -29.20L335.50 -29.20L340.20 -39.60M322.60 -29.20L317.90 -18.80M335.50 -29.20L340.20 -18.80M340.20 -39.60L353.10 -39.60L357.80 -29.20L370.70 -29.20L375.40 -39.60M357.80 -29.20L353.10 -18.80M370.70 -29.20L375.40 -18.80M375.40 -39.60L388.30 -39.60L393.00 -29.20L405.90 -29.20L410.60 -39.60M393.00 -29.20L388.30 -18.80M405.90 -29.20L410.60 -18.80M410.60 -39.60L423.50 -39.60L428.20 -29.20L441.10 -29.20L445.80 -39.60M428.20 -29.20L423.50 -18.80M441.10 -29.20L445.80 -18.80M445.80 -39.60L458.70 -39.60L463.40 -29.20L476.30 -29.20L481.00 -39.60M463.40 -29.20L458.70 -18.80M476.30 -29.20L481.00 -18.80M-47.00 -18.80L-34.10 -18.80L-29.40 -8.40L-16.50 -8.40L-11.80 -18.80M-29.40 -8.40L-34.10 2.00M-16.50 -8.40L-11.80 2.00M-11.80 -18.80L1.10 -18.80L5.80 -8.40L18.70 -8.40L23.40 -18.80M5.80 -8.40L1.10 2.00M18.70 -8.40L23.40 2.00M23.40 -18.80L36.30 -18.80L41.00 -8.40L53.90 -8.40L58.60 -18.80M41.00 -8.40L36.30 2.00M53.90 -8.40L58.60 2.00M58.60 -18.80L71.50 -18.80L76.20 -8.40L89.10 -8.40L93.80 -18.80M76.20 -8.40L71.50 2.00M89.10 -8.40L93.80 2.00M93.80 -18.80L106.70 -18.80L111.40 -8.40L124.30 -8.40L129.00 -18.80M111.40 -8.40L106.70 2.00M124.30 -8.40L129.00 2.00M129.00 -18.80L141.90 -18.80L146.60 -8.40L159.50 -8.40L164.20 -18.80M146.60 -8.40L141.90 2.00M159.50 -8.40L164.20 2.00M164.20 -18.80L177.10 -18.80L181.80 -8.40L194.70 -8.40L199.40 -18.80M181.80 -8.40L177.10 2.00M194.70 -8.40L199.40 2.00M199.40 -18.80L212.30 -18.80L217.00 -8.40L229.90 -8.40L234.60 -18.80M217.00 -8.40L212.30 2.00M229.90 -8.40L234.60 2.00M234.60 -18.80L247.50 -18.80L252.20 -8.40L265.10 -8.40L269.80 -18.80M252.20 -8.40L247.50 2.00M265.10 -8.40L269.80 2.00M269.80 -18.80L282.70 -18.80L287.40 -8.40L300.30 -8.40L305.00 -18.80M287.40 -8.40L282.70 2.00M300.30 -8.40L305.00 2.00M305.00 -18.80L317.90 -18.80L322.60 -8.40L335.50 -8.40L340.20 -18.80M322.60 -8.40L317.90 2.00M335.50 -8.40L340.20 2.00M340.20 -18.80L353.10 -18.80L357.80 -8.40L370.70 -8.40L375.40 -18.80M357.80 -8.40L353.10 2.00M370.70 -8.40L375.40 2.00M375.40 -18.80L388.30 -18.80L393.00 -8.40L405.90 -8.40L410.60 -18.80M393.00 -8.40L388.30 2.00M405.90 -8.40L410.60 2.00M410.60 -18.80L423.50 -18.80L428.20 -8.40L441.10 -8.40L445.80 -18.80M428.20 -8.40L423.50 2.00M441.10 -8.40L445.80 2.00M445.80 -18.80L458.70 -18.80L463.40 -8.40L476.30 -8.40L481.00 -18.80M463.40 -8.40L458.70 2.00M476.30 -8.40L481.00 2.00M-47.00 2.00L-34.10 2.00L-29.40 12.40L-16.50 12.40L-11.80 2.00M-29.40 12.40L-34.10 22.80M-16.50 12.40L-11.80 22.80M-11.80 2.00L1.10 2.00L5.80 12.40L18.70 12.40L23.40 2.00M5.80 12.40L1.10 22.80M18.70 12.40L23.40 22.80M23.40 2.00L36.30 2.00L41.00 12.40L53.90 12.40L58.60 2.00M41.00 12.40L36.30 22.80M53.90 12.40L58.60 22.80M58.60 2.00L71.50 2.00L76.20 12.40L89.10 12.40L93.80 2.00M76.20 12.40L71.50 22.80M89.10 12.40L93.80 22.80M93.80 2.00L106.70 2.00L111.40 12.40L124.30 12.40L129.00 2.00M111.40 12.40L106.70 22.80M124.30 12.40L129.00 22.80M129.00 2.00L141.90 2.00L146.60 12.40L159.50 12.40L164.20 2.00M146.60 12.40L141.90 22.80M159.50 12.40L164.20 22.80M164.20 2.00L177.10 2.00L181.80 12.40L194.70 12.40L199.40 2.00M181.80 12.40L177.10 22.80M194.70 12.40L199.40 22.80M199.40 2.00L212.30 2.00L217.00 12.40L229.90 12.40L234.60 2.00M217.00 12.40L212.30 22.80M229.90 12.40L234.60 22.80M234.60 2.00L247.50 2.00L252.20 12.40L265.10 12.40L269.80 2.00M252.20 12.40L247.50 22.80M265.10 12.40L269.80 22.80M269.80 2.00L282.70 2.00L287.40 12.40L300.30 12.40L305.00 2.00M287.40 12.40L282.70 22.80M300.30 12.40L305.00 22.80M305.00 2.00L317.90 2.00L322.60 12.40L335.50 12.40L340.20 2.00M322.60 12.40L317.90 22.80M335.50 12.40L340.20 22.80M340.20 2.00L353.10 2.00L357.80 12.40L370.70 12.40L375.40 2.00M357.80 12.40L353.10 22.80M370.70 12.40L375.40 22.80M375.40 2.00L388.30 2.00L393.00 12.40L405.90 12.40L410.60 2.00M393.00 12.40L388.30 22.80M405.90 12.40L410.60 22.80M410.60 2.00L423.50 2.00L428.20 12.40L441.10 12.40L445.80 2.00M428.20 12.40L423.50 22.80M441.10 12.40L445.80 22.80M445.80 2.00L458.70 2.00L463.40 12.40L476.30 12.40L481.00 2.00M463.40 12.40L458.70 22.80M476.30 12.40L481.00 22.80M-47.00 22.80L-34.10 22.80L-29.40 33.20L-16.50 33.20L-11.80 22.80M-29.40 33.20L-34.10 43.60M-16.50 33.20L-11.80 43.60M-11.80 22.80L1.10 22.80L5.80 33.20L18.70 33.20L23.40 22.80M5.80 33.20L1.10 43.60M18.70 33.20L23.40 43.60M23.40 22.80L36.30 22.80L41.00 33.20L53.90 33.20L58.60 22.80M41.00 33.20L36.30 43.60M53.90 33.20L58.60 43.60M58.60 22.80L71.50 22.80L76.20 33.20L89.10 33.20L93.80 22.80M76.20 33.20L71.50 43.60M89.10 33.20L93.80 43.60M93.80 22.80L106.70 22.80L111.40 33.20L124.30 33.20L129.00 22.80M111.40 33.20L106.70 43.60M124.30 33.20L129.00 43.60M129.00 22.80L141.90 22.80L146.60 33.20L159.50 33.20L164.20 22.80M146.60 33.20L141.90 43.60M159.50 33.20L164.20 43.60M164.20 22.80L177.10 22.80L181.80 33.20L194.70 33.20L199.40 22.80M181.80 33.20L177.10 43.60M194.70 33.20L199.40 43.60M199.40 22.80L212.30 22.80L217.00 33.20L229.90 33.20L234.60 22.80M217.00 33.20L212.30 43.60M229.90 33.20L234.60 43.60M234.60 22.80L247.50 22.80L252.20 33.20L265.10 33.20L269.80 22.80M252.20 33.20L247.50 43.60M265.10 33.20L269.80 43.60M269.80 22.80L282.70 22.80L287.40 33.20L300.30 33.20L305.00 22.80M287.40 33.20L282.70 43.60M300.30 33.20L305.00 43.60M305.00 22.80L317.90 22.80L322.60 33.20L335.50 33.20L340.20 22.80M322.60 33.20L317.90 43.60M335.50 33.20L340.20 43.60M340.20 22.80L353.10 22.80L357.80 33.20L370.70 33.20L375.40 22.80M357.80 33.20L353.10 43.60M370.70 33.20L375.40 43.60M375.40 22.80L388.30 22.80L393.00 33.20L405.90 33.20L410.60 22.80M393.00 33.20L388.30 43.60M405.90 33.20L410.60 43.60M410.60 22.80L423.50 22.80L428.20 33.20L441.10 33.20L445.80 22.80M428.20 33.20L423.50 43.60M441.10 33.20L445.80 43.60M445.80 22.80L458.70 22.80L463.40 33.20L476.30 33.20L481.00 22.80M463.40 33.20L458.70 43.60M476.30 33.20L481.00 43.60M-47.00 43.60L-34.10 43.60L-29.40 54.00L-16.50 54.00L-11.80 43.60M-29.40 54.00L-34.10 64.40M-16.50 54.00L-11.80 64.40M-11.80 43.60L1.10 43.60L5.80 54.00L18.70 54.00L23.40 43.60M5.80 54.00L1.10 64.40M18.70 54.00L23.40 64.40M23.40 43.60L36.30 43.60L41.00 54.00L53.90 54.00L58.60 43.60M41.00 54.00L36.30 64.40M53.90 54.00L58.60 64.40M58.60 43.60L71.50 43.60L76.20 54.00L89.10 54.00L93.80 43.60M76.20 54.00L71.50 64.40M89.10 54.00L93.80 64.40M93.80 43.60L106.70 43.60L111.40 54.00L124.30 54.00L129.00 43.60M111.40 54.00L106.70 64.40M124.30 54.00L129.00 64.40M129.00 43.60L141.90 43.60L146.60 54.00L159.50 54.00L164.20 43.60M146.60 54.00L141.90 64.40M159.50 54.00L164.20 64.40M164.20 43.60L177.10 43.60L181.80 54.00L194.70 54.00L199.40 43.60M181.80 54.00L177.10 64.40M194.70 54.00L199.40 64.40M199.40 43.60L212.30 43.60L217.00 54.00L229.90 54.00L234.60 43.60M217.00 54.00L212.30 64.40M229.90 54.00L234.60 64.40M234.60 43.60L247.50 43.60L252.20 54.00L265.10 54.00L269.80 43.60M252.20 54.00L247.50 64.40M265.10 54.00L269.80 64.40M269.80 43.60L282.70 43.60L287.40 54.00L300.30 54.00L305.00 43.60M287.40 54.00L282.70 64.40M300.30 54.00L305.00 64.40M305.00 43.60L317.90 43.60L322.60 54.00L335.50 54.00L340.20 43.60M322.60 54.00L317.90 64.40M335.50 54.00L340.20 64.40M340.20 43.60L353.10 43.60L357.80 54.00L370.70 54.00L375.40 43.60M357.80 54.00L353.10 64.40M370.70 54.00L375.40 64.40M375.40 43.60L388.30 43.60L393.00 54.00L405.90 54.00L410.60 43.60M393.00 54.00L388.30 64.40M405.90 54.00L410.60 64.40M410.60 43.60L423.50 43.60L428.20 54.00L441.10 54.00L445.80 43.60M428.20 54.00L423.50 64.40M441.10 54.00L445.80 64.40M445.80 43.60L458.70 43.60L463.40 54.00L476.30 54.00L481.00 43.60M463.40 54.00L458.70 64.40M476.30 54.00L481.00 64.40" stroke="#575757" stroke-width="1.6" fill="none"/></svg><div class="a" style="left:380px;top:234px;width:2px;height:493px;background:#1e1e1e;"></div><div class="a" style="left:594px;top:234px;width:3px;height:493px;background:#1e1e1e;"></div><div class="a" style="left:381px;top:234px;width:93.5px;height:18px;background:#5a5a5a;"></div><svg class="a" style="left:387.3px;top:237.5px" width="12" height="12.5" viewBox="0 0 12 12.5"><ellipse cx="6" cy="11.2" rx="5.6" ry="1.7" fill="#6cc830"/><path d="M5.2 11 L5.4 6.4 L4 5.2 L4.6 4.8 L5.8 5.8 L7.2 4.6 L7.6 5 L6.6 6.4 L6.9 11 Z" fill="#c8641e"/><circle cx="2.8" cy="5" r="2.3" fill="#7cd040"/><circle cx="9.2" cy="5" r="2.3" fill="#7cd040"/><circle cx="4.6" cy="2.6" r="2.3" fill="#7cd040"/><circle cx="7.6" cy="2.8" r="2.3" fill="#7cd040"/><circle cx="4.2" cy="6.4" r="1.6" fill="#7cd040"/><circle cx="8" cy="6.4" r="1.6" fill="#7cd040"/><path d="M5.5 10.8 L5.7 7.2 L6.5 7.2 L6.7 10.8 Z" fill="#c8641e"/></svg><span class="t" style="left:405.60px;top:240.22px;font-size:8.4px;color:#f0f0f0;font-family:'Liberation Mono',monospace;font-weight:bold;">Filetree</span><svg class="a" style="left:457px;top:238.3px" width="10.5" height="10.5" viewBox="0 0 10.5 10.5"><path d="M0.8 0.8 L9.7 9.7 M9.7 0.8 L0.8 9.7" stroke="#f2f2f2" stroke-width="1.5"/></svg><div class="a" style="left:382px;top:252px;width:201.5px;height:297.5px;background:#000;"></div><svg class="a" style="left:386.9px;top:266.90000000000003px" width="3.6" height="3.2" viewBox="0 0 3.6 3.2"><path d="M0 0 L3.6 0 L1.8 3.2 Z" fill="#eee"/></svg><svg class="a" style="left:401.2px;top:309.63500000000005px" width="3.6" height="3.2" viewBox="0 0 3.6 3.2"><path d="M0 0 L3.6 0 L1.8 3.2 Z" fill="#eee"/></svg><svg class="a" style="left:401.2px;top:409.35px" width="3.6" height="3.2" viewBox="0 0 3.6 3.2"><path d="M0 0 L3.6 0 L1.8 3.2 Z" fill="#eee"/></svg><svg class="a" style="left:415.5px;top:423.595px" width="3.6" height="3.2" viewBox="0 0 3.6 3.2"><path d="M0 0 L3.6 0 L1.8 3.2 Z" fill="#eee"/></svg><svg class="a" style="left:429.8px;top:437.84000000000003px" width="3.6" height="3.2" viewBox="0 0 3.6 3.2"><path d="M0 0 L3.6 0 L1.8 3.2 Z" fill="#eee"/></svg><svg class="a" style="left:444.09999999999997px;top:452.08500000000004px" width="3.6" height="3.2" viewBox="0 0 3.6 3.2"><path d="M0 0 L3.6 0 L1.8 3.2 Z" fill="#eee"/></svg><svg class="a" style="left:382px;top:252px" width="201.5" height="297.5" viewBox="0 0 201.5 297.5"><g transform="translate(-382 -252)"><path d="M388.7 267.3L388.7 560.0M388.7 274.5L396.5 274.5M388.7 288.8L396.5 288.8M388.7 303.0L396.5 303.0M388.7 402.8L396.5 402.8M403.0 310.0L403.0 388.5M403.0 317.3L410.8 317.3M403.0 331.5L410.8 331.5M403.0 345.8L410.8 345.8M403.0 360.0L410.8 360.0M403.0 374.3L410.8 374.3M403.0 388.5L410.8 388.5M403.0 409.8L403.0 545.2M403.0 417.0L410.8 417.0M403.0 545.2L410.8 545.2M417.3 424.0L417.3 531.0M417.3 431.2L425.1 431.2M417.3 531.0L425.1 531.0M431.6 438.2L431.6 445.5M431.6 445.5L439.4 445.5M445.9 452.5L445.9 516.7M445.9 459.7L453.7 459.7M445.9 474.0L453.7 474.0M445.9 488.2L453.7 488.2M445.9 502.5L453.7 502.5M445.9 516.7L453.7 516.7" stroke="#9a9a9a" stroke-width="1" fill="none"/></g></svg><svg class="a" style="left:382.5px;top:254.3px" width="12.5" height="12" viewBox="0 0 12.5 12"><path d="M0.5 2 Q0.5 1 1.5 1 L4.5 1 L5.8 2.4 L10.8 2.4 Q11.8 2.4 11.8 3.4 L11.8 10.4 Q11.8 11.4 10.8 11.4 L1.5 11.4 Q0.5 11.4 0.5 10.4 Z" fill="#f7e21c"/><circle cx="6.2" cy="6.8" r="3.2" fill="#666a70"/><circle cx="6.2" cy="6.8" r="3.8" fill="none" stroke="#666a70" stroke-width="1.2" stroke-dasharray="1 1"/></svg><span class="t" style="left:399.40px;top:256.52px;font-size:8.4px;color:#d8d8d8;font-family:'Liberation Mono',monospace;">C:/Users/krist/gd32vf103c-start</span><svg class="a" style="left:396.8px;top:268.545px" width="12.5" height="12" viewBox="0 0 12.5 12"><path d="M0.5 2 Q0.5 1 1.5 1 L4.5 1 L5.8 2.4 L10.8 2.4 Q11.8 2.4 11.8 3.4 L11.8 10.4 Q11.8 11.4 10.8 11.4 L1.5 11.4 Q0.5 11.4 0.5 10.4 Z" fill="#f7e21c"/><circle cx="5" cy="6.5" r="1.6" fill="#f4f0e0" stroke="#999" stroke-width="0.4"/><circle cx="8" cy="6.5" r="1.6" fill="#f4f0e0" stroke="#999" stroke-width="0.4"/><path d="M2.5 10.5 L4 9" stroke="#3070c0" stroke-width="1.2"/></svg><svg class="a" style="left:409.2px;top:271.945px" width="5" height="5.2" viewBox="0 0 5 5.2"><path d="M0 0 L4 2.6 L0 5.2 Z" fill="#eee"/></svg><span class="t" style="left:414.20px;top:270.76px;font-size:8.4px;color:#d8d8d8;font-family:'Liberation Mono',monospace;">.beetle</span><svg class="a" style="left:396.8px;top:282.79px" width="12.5" height="12" viewBox="0 0 12.5 12"><path d="M0.5 2 Q0.5 1 1.5 1 L4.5 1 L5.8 2.4 L10.8 2.4 Q11.8 2.4 11.8 3.4 L11.8 10.4 Q11.8 11.4 10.8 11.4 L1.5 11.4 Q0.5 11.4 0.5 10.4 Z" fill="#f7e21c"/><path d="M6 7 L10 10.5" stroke="#b07030" stroke-width="1.4"/><rect x="-3" y="-1.8" width="6" height="3.6" rx="0.6" fill="#6a6a6a" transform="translate(5 6) rotate(-45)"/></svg><svg class="a" style="left:409.2px;top:286.19px" width="5" height="5.2" viewBox="0 0 5 5.2"><path d="M0 0 L4 2.6 L0 5.2 Z" fill="#eee"/></svg><span class="t" style="left:414.20px;top:285.01px;font-size:8.4px;color:#d8d8d8;font-family:'Liberation Mono',monospace;">build</span><svg class="a" style="left:396.8px;top:297.035px" width="12.5" height="12" viewBox="0 0 12.5 12"><path d="M0.5 2 Q0.5 1 1.5 1 L4.5 1 L5.8 2.4 L10.8 2.4 Q11.8 2.4 11.8 3.4 L11.8 10.4 Q11.8 11.4 10.8 11.4 L1.5 11.4 Q0.5 11.4 0.5 10.4 Z" fill="#f7e21c"/></svg><svg class="a" style="left:413.8px;top:298.035px" width="9.5" height="9.5" viewBox="0 0 9.5 9.5"><rect x="0" y="0" width="9.4" height="9.4" rx="0.8" fill="#86e054"/><path d="M2.2 4.8 L4 6.6 L7.4 3" stroke="#4c9c30" stroke-width="1.1" fill="none"/></svg><span class="t" style="left:426.50px;top:299.25px;font-size:8.4px;color:#d8d8d8;font-family:'Liberation Mono',monospace;">config</span><svg class="a" style="left:411.0px;top:311.08000000000004px" width="12" height="12.5" viewBox="0 0 12 12.5"><path d="M1.2 0.5 L7.5 0.5 L10.5 3.5 L10.5 11 Q10.5 11.8 9.7 11.8 L2 11.8 Q1.2 11.8 1.2 11 Z" fill="#eeeeea"/><path d="M7.5 0.5 L7.5 3.5 L10.5 3.5 Z" fill="#c4c4bc"/><path d="M2.2 3.2 Q2.4 5.4 4.4 5.6 M9.4 3.2 Q9.2 5.4 7.2 5.6" stroke="#6a6a6a" stroke-width="1.1" fill="none"/><path d="M3.2 5.2 L8.4 5.2 L7.4 7 L7 10.4 L4.6 10.4 L4.2 7 Z" fill="#6a6a6a"/><path d="M2.2 6.4 L4.2 6.6 M9.4 6.4 L7.4 6.6" stroke="#6a6a6a" stroke-width="0.9"/></svg><svg class="a" style="left:428.1px;top:312.28000000000003px" width="9.5" height="9.5" viewBox="0 0 9.5 9.5"><rect x="0" y="0" width="9.4" height="9.4" rx="0.8" fill="#86e054"/><path d="M2.2 4.8 L4 6.6 L7.4 3" stroke="#4c9c30" stroke-width="1.1" fill="none"/></svg><span class="t" style="left:440.80px;top:313.50px;font-size:8.4px;color:#d8d8d8;font-family:'Liberation Mono',monospace;">dashboard.mk</span><svg class="a" style="left:411.0px;top:325.325px" width="12" height="12.5" viewBox="0 0 12 12.5"><path d="M1.2 0.5 L7.5 0.5 L10.5 3.5 L10.5 11 Q10.5 11.8 9.7 11.8 L2 11.8 Q1.2 11.8 1.2 11 Z" fill="#eeeeea"/><path d="M7.5 0.5 L7.5 3.5 L10.5 3.5 Z" fill="#c4c4bc"/><path d="M2.2 3.2 Q2.4 5.4 4.4 5.6 M9.4 3.2 Q9.2 5.4 7.2 5.6" stroke="#6a6a6a" stroke-width="1.1" fill="none"/><path d="M3.2 5.2 L8.4 5.2 L7.4 7 L7 10.4 L4.6 10.4 L4.2 7 Z" fill="#6a6a6a"/><path d="M2.2 6.4 L4.2 6.6 M9.4 6.4 L7.4 6.6" stroke="#6a6a6a" stroke-width="0.9"/></svg><svg class="a" style="left:428.1px;top:326.525px" width="9.5" height="9.5" viewBox="0 0 9.5 9.5"><rect x="0" y="0" width="9.4" height="9.4" rx="0.8" fill="#86e054"/><path d="M2.2 4.8 L4 6.6 L7.4 3" stroke="#4c9c30" stroke-width="1.1" fill="none"/></svg><span class="t" style="left:440.80px;top:327.74px;font-size:8.4px;color:#d8d8d8;font-family:'Liberation Mono',monospace;">filetree.mk</span><svg class="a" style="left:411.0px;top:339.57px" width="12" height="12.5" viewBox="0 0 12 12.5"><path d="M1.2 0.5 L7.5 0.5 L10.5 3.5 L10.5 11 Q10.5 11.8 9.7 11.8 L2 11.8 Q1.2 11.8 1.2 11 Z" fill="#eeeeea"/><path d="M7.5 0.5 L7.5 3.5 L10.5 3.5 Z" fill="#c4c4bc"/><text x="5.8" y="9.4" font-size="6" text-anchor="middle" fill="#777" font-family="Liberation Sans">.ld</text></svg><svg class="a" style="left:428.1px;top:340.77px" width="9.5" height="9.5" viewBox="0 0 9.5 9.5"><rect x="0" y="0" width="9.4" height="9.4" rx="0.8" fill="#86e054"/><path d="M2.2 4.8 L4 6.6 L7.4 3" stroke="#4c9c30" stroke-width="1.1" fill="none"/></svg><span class="t" style="left:440.80px;top:341.99px;font-size:8.4px;color:#d8d8d8;font-family:'Liberation Mono',monospace;">linkerscript.ld</span><svg class="a" style="left:411.0px;top:353.815px" width="12" height="12.5" viewBox="0 0 12 12.5"><path d="M1.2 0.5 L7.5 0.5 L10.5 3.5 L10.5 11 Q10.5 11.8 9.7 11.8 L2 11.8 Q1.2 11.8 1.2 11 Z" fill="#eeeeea"/><path d="M7.5 0.5 L7.5 3.5 L10.5 3.5 Z" fill="#c4c4bc"/><path d="M2.2 3.2 Q2.4 5.4 4.4 5.6 M9.4 3.2 Q9.2 5.4 7.2 5.6" stroke="#6a6a6a" stroke-width="1.1" fill="none"/><path d="M3.2 5.2 L8.4 5.2 L7.4 7 L7 10.4 L4.6 10.4 L4.2 7 Z" fill="#6a6a6a"/><path d="M2.2 6.4 L4.2 6.6 M9.4 6.4 L7.4 6.6" stroke="#6a6a6a" stroke-width="0.9"/></svg><svg class="a" style="left:428.1px;top:355.015px" width="9.5" height="9.5" viewBox="0 0 9.5 9.5"><rect x="0" y="0" width="9.4" height="9.4" rx="0.8" fill="#86e054"/><path d="M2.2 4.8 L4 6.6 L7.4 3" stroke="#4c9c30" stroke-width="1.1" fill="none"/></svg><span class="t" style="left:440.80px;top:356.23px;font-size:8.4px;color:#d8d8d8;font-family:'Liberation Mono',monospace;">makefile</span><svg class="a" style="left:411.0px;top:368.06px" width="12" height="12.5" viewBox="0 0 12 12.5"><path d="M1.2 0.5 L7.5 0.5 L10.5 3.5 L10.5 11 Q10.5 11.8 9.7 11.8 L2 11.8 Q1.2 11.8 1.2 11 Z" fill="#eeeeea"/><path d="M7.5 0.5 L7.5 3.5 L10.5 3.5 Z" fill="#c4c4bc"/><path d="M3 6 L8.5 6 M3 8.5 L6.5 8.5" stroke="#777" stroke-width="1.2"/></svg><span class="t" style="left:427.70px;top:370.48px;font-size:8.4px;color:#d8d8d8;font-family:'Liberation Mono',monospace;">openocd_chip.cfg</span><svg class="a" style="left:411.0px;top:382.305px" width="12" height="12.5" viewBox="0 0 12 12.5"><path d="M1.2 0.5 L7.5 0.5 L10.5 3.5 L10.5 11 Q10.5 11.8 9.7 11.8 L2 11.8 Q1.2 11.8 1.2 11 Z" fill="#eeeeea"/><path d="M7.5 0.5 L7.5 3.5 L10.5 3.5 Z" fill="#c4c4bc"/><path d="M3 6 L8.5 6 M3 8.5 L6.5 8.5" stroke="#777" stroke-width="1.2"/></svg><span class="t" style="left:427.70px;top:384.72px;font-size:8.4px;color:#d8d8d8;font-family:'Liberation Mono',monospace;">openocd_probe.cfg</span><svg class="a" style="left:396.8px;top:396.75px" width="12.5" height="12" viewBox="0 0 12.5 12"><path d="M0.5 2 Q0.5 1 1.5 1 L4.5 1 L5.8 2.4 L10.8 2.4 Q11.8 2.4 11.8 3.4 L11.8 10.4 Q11.8 11.4 10.8 11.4 L1.5 11.4 Q0.5 11.4 0.5 10.4 Z" fill="#f7e21c"/></svg><svg class="a" style="left:413.8px;top:397.75px" width="9.5" height="9.5" viewBox="0 0 9.5 9.5"><rect x="0" y="0" width="9.4" height="9.4" fill="#80dc50"/><path d="M0 0 L9.4 0 L0 9.4 Z" fill="#ee4a4a"/><path d="M9.4 0 L0 9.4" stroke="#111" stroke-width="0.6"/></svg><svg class="a" style="left:426.8px;top:397.75px" width="9.6" height="9.6" viewBox="0 0 9.6 9.6"><circle cx="4.8" cy="4.8" r="4.6" fill="#80dc50"/><path d="M2.4 4.8 L4.1 6.5 L7.3 3.2" stroke="#3f8f2a" stroke-width="1.1" fill="none"/></svg><span class="t" style="left:439.50px;top:398.97px;font-size:8.4px;color:#d8d8d8;font-family:'Liberation Mono',monospace;">source</span><svg class="a" style="left:411.1px;top:410.995px" width="12.5" height="12" viewBox="0 0 12.5 12"><path d="M0.5 2 Q0.5 1 1.5 1 L4.5 1 L5.8 2.4 L10.8 2.4 Q11.8 2.4 11.8 3.4 L11.8 10.4 Q11.8 11.4 10.8 11.4 L1.5 11.4 Q0.5 11.4 0.5 10.4 Z" fill="#f7e21c"/></svg><svg class="a" style="left:428.1px;top:411.995px" width="9.5" height="9.5" viewBox="0 0 9.5 9.5"><rect x="0" y="0" width="9.4" height="9.4" fill="#80dc50"/><path d="M0 0 L9.4 0 L0 9.4 Z" fill="#ee4a4a"/><path d="M9.4 0 L0 9.4" stroke="#111" stroke-width="0.6"/></svg><svg class="a" style="left:441.1px;top:411.995px" width="9.6" height="9.6" viewBox="0 0 9.6 9.6"><circle cx="4.8" cy="4.8" r="4.6" fill="#80dc50"/><path d="M2.4 4.8 L4.1 6.5 L7.3 3.2" stroke="#3f8f2a" stroke-width="1.1" fill="none"/></svg><span class="t" style="left:453.80px;top:413.21px;font-size:8.4px;color:#d8d8d8;font-family:'Liberation Mono',monospace;">demo_suites</span><svg class="a" style="left:425.40000000000003px;top:425.24px" width="12.5" height="12" viewBox="0 0 12.5 12"><path d="M0.5 2 Q0.5 1 1.5 1 L4.5 1 L5.8 2.4 L10.8 2.4 Q11.8 2.4 11.8 3.4 L11.8 10.4 Q11.8 11.4 10.8 11.4 L1.5 11.4 Q0.5 11.4 0.5 10.4 Z" fill="#f7e21c"/></svg><svg class="a" style="left:442.40000000000003px;top:426.24px" width="9.5" height="9.5" viewBox="0 0 9.5 9.5"><rect x="0" y="0" width="9.4" height="9.4" rx="0.8" fill="#86e054"/><path d="M2.2 4.8 L4 6.6 L7.4 3" stroke="#4c9c30" stroke-width="1.1" fill="none"/></svg><svg class="a" style="left:455.40000000000003px;top:426.24px" width="9.6" height="9.6" viewBox="0 0 9.6 9.6"><circle cx="4.8" cy="4.8" r="4.6" fill="#80dc50"/><path d="M2.4 4.8 L4.1 6.5 L7.3 3.2" stroke="#3f8f2a" stroke-width="1.1" fill="none"/></svg><span class="t" style="left:468.10px;top:427.46px;font-size:8.4px;color:#d8d8d8;font-family:'Liberation Mono',monospace;">Projects</span><svg class="a" style="left:439.7px;top:439.485px" width="12.5" height="12" viewBox="0 0 12.5 12"><path d="M0.5 2 Q0.5 1 1.5 1 L4.5 1 L5.8 2.4 L10.8 2.4 Q11.8 2.4 11.8 3.4 L11.8 10.4 Q11.8 11.4 10.8 11.4 L1.5 11.4 Q0.5 11.4 0.5 10.4 Z" fill="#f7e21c"/></svg><svg class="a" style="left:456.7px;top:440.485px" width="9.5" height="9.5" viewBox="0 0 9.5 9.5"><rect x="0" y="0" width="9.4" height="9.4" rx="0.8" fill="#86e054"/><path d="M2.2 4.8 L4 6.6 L7.4 3" stroke="#4c9c30" stroke-width="1.1" fill="none"/></svg><svg class="a" style="left:469.7px;top:440.485px" width="9.6" height="9.6" viewBox="0 0 9.6 9.6"><circle cx="4.8" cy="4.8" r="4.6" fill="#80dc50"/><path d="M2.4 4.8 L4.1 6.5 L7.3 3.2" stroke="#3f8f2a" stroke-width="1.1" fill="none"/></svg><svg class="a" style="left:482.7px;top:440.485px" width="10" height="10" viewBox="0 0 10 10"><circle cx="4.3" cy="4.3" r="3.6" fill="#5aa0ec" stroke="#3a7ad0" stroke-width="0.8"/><circle cx="3.6" cy="3.6" r="1.5" fill="#a8d0f8"/><path d="M6.8 6.8 L9.4 9.4" stroke="#3a7ad0" stroke-width="1.8" stroke-linecap="round"/></svg><span class="t" style="left:495.40px;top:441.70px;font-size:8.4px;color:#d8d8d8;font-family:'Liberation Mono',monospace;">01_GPIO_Running_LED</span><svg class="a" style="left:453.9px;top:453.53000000000003px" width="12" height="12.5" viewBox="0 0 12 12.5"><path d="M1.2 0.5 L7.5 0.5 L10.5 3.5 L10.5 11 Q10.5 11.8 9.7 11.8 L2 11.8 Q1.2 11.8 1.2 11 Z" fill="#eeeeea"/><path d="M7.5 0.5 L7.5 3.5 L10.5 3.5 Z" fill="#c4c4bc"/><text x="5.8" y="9.4" font-size="6" text-anchor="middle" fill="#777" font-family="Liberation Sans">.h</text></svg><svg class="a" style="left:471.0px;top:454.73px" width="9.6" height="9.6" viewBox="0 0 9.6 9.6"><circle cx="4.8" cy="4.8" r="4.6" fill="#80dc50"/><path d="M2.4 4.8 L4.1 6.5 L7.3 3.2" stroke="#3f8f2a" stroke-width="1.1" fill="none"/></svg><span class="t" style="left:483.70px;top:455.95px;font-size:8.4px;color:#d8d8d8;font-family:'Liberation Mono',monospace;">gd32vf103_libopt.h</span><svg class="a" style="left:453.9px;top:467.77500000000003px" width="12" height="12.5" viewBox="0 0 12 12.5"><path d="M1.2 0.5 L7.5 0.5 L10.5 3.5 L10.5 11 Q10.5 11.8 9.7 11.8 L2 11.8 Q1.2 11.8 1.2 11 Z" fill="#eeeeea"/><path d="M7.5 0.5 L7.5 3.5 L10.5 3.5 Z" fill="#c4c4bc"/><text x="5.8" y="9.4" font-size="6" text-anchor="middle" fill="#777" font-family="Liberation Sans">.c</text></svg><svg class="a" style="left:471.0px;top:468.975px" width="9.5" height="9.5" viewBox="0 0 9.5 9.5"><rect x="0" y="0" width="9.4" height="9.4" rx="0.8" fill="#86e054"/><path d="M2.2 4.8 L4 6.6 L7.4 3" stroke="#4c9c30" stroke-width="1.1" fill="none"/></svg><span class="t" style="left:483.70px;top:470.19px;font-size:8.4px;color:#d8d8d8;font-family:'Liberation Mono',monospace;">main.c</span><svg class="a" style="left:453.9px;top:482.02000000000004px" width="12" height="12.5" viewBox="0 0 12 12.5"><path d="M1.2 0.5 L7.5 0.5 L10.5 3.5 L10.5 11 Q10.5 11.8 9.7 11.8 L2 11.8 Q1.2 11.8 1.2 11 Z" fill="#eeeeea"/><path d="M7.5 0.5 L7.5 3.5 L10.5 3.5 Z" fill="#c4c4bc"/><path d="M3 6 L8.5 6 M3 8.5 L6.5 8.5" stroke="#777" stroke-width="1.2"/></svg><span class="t" style="left:470.60px;top:484.44px;font-size:8.4px;color:#d8d8d8;font-family:'Liberation Mono',monospace;">readme.txt</span><svg class="a" style="left:453.9px;top:496.26500000000004px" width="12" height="12.5" viewBox="0 0 12 12.5"><path d="M1.2 0.5 L7.5 0.5 L10.5 3.5 L10.5 11 Q10.5 11.8 9.7 11.8 L2 11.8 Q1.2 11.8 1.2 11 Z" fill="#eeeeea"/><path d="M7.5 0.5 L7.5 3.5 L10.5 3.5 Z" fill="#c4c4bc"/><text x="5.8" y="9.4" font-size="6" text-anchor="middle" fill="#777" font-family="Liberation Sans">.c</text></svg><svg class="a" style="left:471.0px;top:497.46500000000003px" width="9.5" height="9.5" viewBox="0 0 9.5 9.5"><rect x="0" y="0" width="9.4" height="9.4" rx="0.8" fill="#86e054"/><path d="M2.2 4.8 L4 6.6 L7.4 3" stroke="#4c9c30" stroke-width="1.1" fill="none"/></svg><span class="t" style="left:483.70px;top:498.68px;font-size:8.4px;color:#d8d8d8;font-family:'Liberation Mono',monospace;">systick.c</span><svg class="a" style="left:453.9px;top:510.51000000000005px" width="12" height="12.5" viewBox="0 0 12 12.5"><path d="M1.2 0.5 L7.5 0.5 L10.5 3.5 L10.5 11 Q10.5 11.8 9.7 11.8 L2 11.8 Q1.2 11.8 1.2 11 Z" fill="#eeeeea"/><path d="M7.5 0.5 L7.5 3.5 L10.5 3.5 Z" fill="#c4c4bc"/><text x="5.8" y="9.4" font-size="6" text-anchor="middle" fill="#777" font-family="Liberation Sans">.h</text></svg><svg class="a" style="left:471.0px;top:511.71000000000004px" width="9.6" height="9.6" viewBox="0 0 9.6 9.6"><circle cx="4.8" cy="4.8" r="4.6" fill="#80dc50"/><path d="M2.4 4.8 L4.1 6.5 L7.3 3.2" stroke="#3f8f2a" stroke-width="1.1" fill="none"/></svg><span class="t" style="left:483.70px;top:512.93px;font-size:8.4px;color:#d8d8d8;font-family:'Liberation Mono',monospace;">systick.h</span><svg class="a" style="left:425.40000000000003px;top:524.9549999999999px" width="12.5" height="12" viewBox="0 0 12.5 12"><path d="M0.5 2 Q0.5 1 1.5 1 L4.5 1 L5.8 2.4 L10.8 2.4 Q11.8 2.4 11.8 3.4 L11.8 10.4 Q11.8 11.4 10.8 11.4 L1.5 11.4 Q0.5 11.4 0.5 10.4 Z" fill="#f7e21c"/></svg><svg class="a" style="left:437.8px;top:528.3549999999999px" width="5" height="5.2" viewBox="0 0 5 5.2"><path d="M0 0 L4 2.6 L0 5.2 Z" fill="#eee"/></svg><svg class="a" style="left:442.40000000000003px;top:525.9549999999999px" width="10" height="10" viewBox="0 0 10 10"><rect x="0" y="0" width="9.8" height="9.8" rx="0.6" fill="#ee4848"/><path d="M2.5 2.5 L7.3 7.3 M7.3 2.5 L2.5 7.3" stroke="#b02a2a" stroke-width="1.3"/></svg><svg class="a" style="left:455.40000000000003px;top:525.9549999999999px" width="9.6" height="9.6" viewBox="0 0 9.6 9.6"><circle cx="4.8" cy="4.8" r="4.6" fill="#80dc50"/><path d="M2.4 4.8 L4.1 6.5 L7.3 3.2" stroke="#3f8f2a" stroke-width="1.1" fill="none"/></svg><svg class="a" style="left:468.40000000000003px;top:525.9549999999999px" width="10" height="10" viewBox="0 0 10 10"><circle cx="4.3" cy="4.3" r="3.6" fill="#5aa0ec" stroke="#3a7ad0" stroke-width="0.8"/><circle cx="3.6" cy="3.6" r="1.5" fill="#a8d0f8"/><path d="M6.8 6.8 L9.4 9.4" stroke="#3a7ad0" stroke-width="1.8" stroke-linecap="round"/></svg><span class="t" style="left:481.10px;top:527.17px;font-size:8.4px;color:#d8d8d8;font-family:'Liberation Mono',monospace;">Utilities</span><svg class="a" style="left:411.1px;top:539.2px" width="12.5" height="12" viewBox="0 0 12.5 12"><path d="M0.5 2 Q0.5 1 1.5 1 L4.5 1 L5.8 2.4 L10.8 2.4 Q11.8 2.4 11.8 3.4 L11.8 10.4 Q11.8 11.4 10.8 11.4 L1.5 11.4 Q0.5 11.4 0.5 10.4 Z" fill="#f7e21c"/></svg><svg class="a" style="left:423.5px;top:542.6px" width="5" height="5.2" viewBox="0 0 5 5.2"><path d="M0 0 L4 2.6 L0 5.2 Z" fill="#eee"/></svg><svg class="a" style="left:428.1px;top:540.2px" width="9.5" height="9.5" viewBox="0 0 9.5 9.5"><rect x="0" y="0" width="9.4" height="9.4" fill="#80dc50"/><path d="M0 0 L9.4 0 L0 9.4 Z" fill="#ee4a4a"/><path d="M9.4 0 L0 9.4" stroke="#111" stroke-width="0.6"/></svg><svg class="a" style="left:441.1px;top:540.2px" width="9.6" height="9.6" viewBox="0 0 9.6 9.6"><circle cx="4.8" cy="4.8" r="4.6" fill="#80dc50"/><path d="M2.4 4.8 L4.1 6.5 L7.3 3.2" stroke="#3f8f2a" stroke-width="1.1" fill="none"/></svg><span class="t" style="left:453.80px;top:541.42px;font-size:8.4px;color:#d8d8d8;font-family:'Liberation Mono',monospace;">firmware_library</span><div class="a" style="left:583.5px;top:252px;width:10.5px;height:297.5px;background:#1c1c1c;"></div><div class="a" style="left:584px;top:522px;width:9.5px;height:27.5px;background:#434343;"></div><div class="a" style="left:382px;top:549.5px;width:201.5px;height:9px;background:#222;"></div><div class="a" style="left:562px;top:549.5px;width:21.5px;height:9px;background:#444;"></div><div class="a" style="left:583.5px;top:549.5px;width:10.5px;height:9px;background:#000;"></div><div class="a" style="left:595px;top:234px;width:87.5px;height:18px;background:#5a5a5a;"></div><svg class="a" style="left:600.8px;top:237.2px" width="12" height="12" viewBox="0 0 12 12"><path d="M2.2 2.2 L9.8 9.8 M9.8 2.2 L2.2 9.8" stroke="#e08a20" stroke-width="1.3"/><circle cx="6" cy="6" r="2.6" fill="#f6c030"/><circle cx="2" cy="2" r="1.6" fill="#f6c030"/><circle cx="10" cy="2" r="1.6" fill="#f6c030"/><circle cx="2" cy="10" r="1.6" fill="#f6c030"/><circle cx="10" cy="10" r="1.6" fill="#f6c030"/></svg><span class="t" style="left:620.00px;top:240.22px;font-size:8.4px;color:#f0f0f0;font-family:'Liberation Mono',monospace;font-weight:bold;">Symbols</span><svg class="a" style="left:665.5px;top:238.3px" width="10.5" height="10.5" viewBox="0 0 10.5 10.5"><path d="M0.8 0.8 L9.7 9.7 M9.7 0.8 L0.8 9.7" stroke="#f2f2f2" stroke-width="1.5"/></svg><div class="a" style="left:595px;top:252px;width:230px;height:309px;background:#000;"></div><div class="a" style="left:596px;top:254px;width:17px;height:14px;background:#4e4e4e;outline:1px solid #3a3a3a"></div><svg class="a" style="left:599.2px;top:255.6px" width="11" height="11" viewBox="0 0 11 11"><path d="M2 0.5 L7 0.5 L9.5 3 L9.5 10.5 L2 10.5 Z" fill="#f0f0e8"/><path d="M3.5 5 L7.5 5 M3.5 7 L6.5 7" stroke="#555" stroke-width="1"/></svg><div class="a" style="left:614.7px;top:254px;width:16.6px;height:14px;background:#d6d6d6;"></div><svg class="a" style="left:617px;top:256.6px" width="12" height="9" viewBox="0 0 12 9"><path d="M1 4.5 L3.5 1.5 L10.5 1.5 L10.5 7.5 L3.5 7.5 Z" fill="#f4f4f4" stroke="#bbb" stroke-width="0.5"/><path d="M5 3.2 L8.5 3.2 M6.7 3.2 L6.7 6" stroke="#555" stroke-width="1"/></svg><div class="a" style="left:595px;top:269.6px;width:230px;height:1px;background:#1a1a1a;"></div><div class="a" style="left:597px;top:549.7px;width:227px;height:9px;background:#1e1e1e;"></div><div class="a" style="left:728.5px;top:549.7px;width:95.5px;height:9px;background:#3a3a3a;"></div><svg class="a" style="left:596.4px;top:272.1px" width="12" height="11" viewBox="0 0 12 11"><rect x="0.3" y="0.8" width="11.4" height="9" rx="1.2" fill="#f0f0ea"/><circle cx="3.6" cy="4.2" r="1.5" fill="#444"/><path d="M1.5 8.4 Q3.6 5.4 5.7 8.4 Z" fill="#444"/><path d="M7 3.6 L10.4 3.6 M7 5.6 L10.4 5.6 M7 7.6 L10.4 7.6" stroke="#444" stroke-width="0.9"/></svg><span class="t" style="left:613.70px;top:274.62px;font-size:8.4px;color:#d8d8d8;font-family:'Liberation Mono',monospace;">Symbol kind: global symbol __stack_size</span><svg class="a" style="left:596.4px;top:284.78px" width="12" height="13.5" viewBox="0 0 12 13.5"><path d="M2 8.5 L8.6 1.9 Q9.4 1.2 10.2 2 L10.8 2.6 Q11.5 3.4 10.8 4.1 L4.2 10.7 L1.6 11 Z" fill="#e0a030"/><path d="M1.6 11 L2.6 8.4 L4.2 10 Z" fill="#f4e4c0"/><rect x="0.5" y="12" width="11" height="1" fill="#ccc"/></svg><span class="t" style="left:613.70px;top:288.90px;font-size:8.4px;color:#d8d8d8;font-family:'Liberation Mono',monospace;">Definitions (1):</span><span class="t" style="left:610.20px;top:304.25px;font-size:6.2px;color:#4e4e4e;font-family:'Liberation Mono',monospace;letter-spacing:-0.1px;">&gt;&gt;&gt;</span><span class="t" style="left:628.40px;top:303.18px;font-size:8.4px;color:#d8d8d8;font-family:'Liberation Mono',monospace;">linkerscript.ld, 26, '...__stack_size =</span><svg class="a" style="left:596.4px;top:314.34px" width="12" height="12" viewBox="0 0 12 12"><path d="M6.4 1.2 L10.8 5.6 L9.4 6.2 L7.4 8.8 L7.6 10.6 L6.6 11 L1.4 5.8 L1.8 4.8 L3.6 5 L6.2 3 Z" fill="#7a7e84"/><path d="M4 8 L0.6 11.4" stroke="#7a7e84" stroke-width="1.2"/></svg><span class="t" style="left:613.70px;top:317.46px;font-size:8.4px;color:#d8d8d8;font-family:'Liberation Mono',monospace;">Uses (4):</span><span class="t" style="left:610.20px;top:332.81px;font-size:6.2px;color:#4e4e4e;font-family:'Liberation Mono',monospace;letter-spacing:-0.1px;">&gt;&gt;&gt;</span><span class="t" style="left:628.40px;top:331.74px;font-size:8.4px;color:#d8d8d8;font-family:'Liberation Mono',monospace;">linkerscript.ld, 178, '...(RAM) + LENGTH</span><span class="t" style="left:610.20px;top:347.09px;font-size:6.2px;color:#4e4e4e;font-family:'Liberation Mono',monospace;letter-spacing:-0.1px;">&gt;&gt;&gt;</span><span class="t" style="left:628.40px;top:346.02px;font-size:8.4px;color:#d8d8d8;font-family:'Liberation Mono',monospace;">linkerscript.ld, 181, '        . = __st</span><span class="t" style="left:610.20px;top:361.37px;font-size:6.2px;color:#4e4e4e;font-family:'Liberation Mono',monospace;letter-spacing:-0.1px;">&gt;&gt;&gt;</span><span class="t" style="left:628.40px;top:360.30px;font-size:8.4px;color:#d8d8d8;font-family:'Liberation Mono',monospace;">linkerscript.ld, 26, '...D(__stack_size</span><span class="t" style="left:610.20px;top:375.65px;font-size:6.2px;color:#4e4e4e;font-family:'Liberation Mono',monospace;letter-spacing:-0.1px;">&gt;&gt;&gt;</span><span class="t" style="left:628.40px;top:374.58px;font-size:8.4px;color:#d8d8d8;font-family:'Liberation Mono',monospace;">linkerscript.ld, 26, '...D(__stack_size</span><svg class="a" style="left:595px;top:252px" width="230" height="309" viewBox="0 0 230 309"><g transform="translate(-595 -252)"><path d="M601.9 306.9L610 306.9M601.9 335.4L610 335.4M601.9 349.7L610 349.7M601.9 364.0L610 364.0M601.9 378.3L610 378.3M601.9 299.1L601.9 306.9M601.9 327.6L601.9 378.3" stroke="#a8a8a8" stroke-width="1" fill="none"/></g></svg><svg class="a" style="left:600.2px;top:298.78px" width="3.4" height="3" viewBox="0 0 3.4 3"><path d="M0 0 L3.4 0 L1.7 3 Z" fill="#eee"/></svg><svg class="a" style="left:600.2px;top:327.34px" width="3.4" height="3" viewBox="0 0 3.4 3"><path d="M0 0 L3.4 0 L1.7 3 Z" fill="#eee"/></svg><div class="a" style="left:381px;top:561px;width:99px;height:18px;background:#5a5a5a;"></div><svg class="a" style="left:387.3px;top:563.6px" width="12" height="12" viewBox="0 0 12 12"><path d="M1.4 10.6 A5.6 5.6 0 1 1 10.6 10.6 Z" fill="#f6d820"/><path d="M4.6 10 Q5 8 8.4 4 Q7.8 8.6 7.6 10 Q6.2 11.8 4.6 10 Z" fill="#e02020"/></svg><span class="t" style="left:405.50px;top:567.22px;font-size:8.4px;color:#f0f0f0;font-family:'Liberation Mono',monospace;font-weight:bold;">Dashboard</span><svg class="a" style="left:462.3px;top:565.3px" width="10.5" height="10.5" viewBox="0 0 10.5 10.5"><path d="M0.8 0.8 L9.7 9.7 M9.7 0.8 L0.8 9.7" stroke="#f2f2f2" stroke-width="1.5"/></svg><div class="a" style="left:382px;top:579px;width:212.5px;height:148px;background:#000;"></div><svg class="a" style="left:382.4px;top:580.0px" width="13" height="13" viewBox="0 0 13 13"><rect x="0.5" y="0.5" width="12" height="12" rx="2" fill="#deded6"/><rect x="1.6" y="2.4" width="1.8" height="3" fill="#a4ac78"/><rect x="1.6" y="7.4" width="1.8" height="3" fill="#a4ac78"/><rect x="9.6" y="2.4" width="1.8" height="3" fill="#a4ac78"/><rect x="9.6" y="7.4" width="1.8" height="3" fill="#a4ac78"/><circle cx="6.5" cy="7.6" r="1.5" fill="#666"/><path d="M4 2.2 L8.6 4.6" stroke="#555" stroke-width="0.8"/></svg><svg class="a" style="left:396px;top:584.3px" width="4" height="4.4" viewBox="0 0 4 4.4"><path d="M0 0 L3.6 2.2 L0 4.4 Z" fill="#eee"/></svg><span class="t" style="left:399.80px;top:583.12px;font-size:8.4px;color:#d8d8d8;font-family:'Liberation Mono',monospace;">Board</span><svg class="a" style="left:382.4px;top:594.25px" width="13" height="13" viewBox="0 0 13 13"><rect x="2.5" y="2.5" width="8" height="8" fill="#888"/><path d="M1 4 L12 4 M1 6.5 L12 6.5 M1 9 L12 9 M4 1 L4 12 M6.5 1 L6.5 12 M9 1 L9 12" stroke="#ccc" stroke-width="0.8"/><rect x="3" y="3" width="7" height="7" fill="#8a8a8a"/><path d="M3 9 L10 4" stroke="#ddd" stroke-width="1.2"/></svg><svg class="a" style="left:396px;top:598.55px" width="4" height="4.4" viewBox="0 0 4 4.4"><path d="M0 0 L3.6 2.2 L0 4.4 Z" fill="#eee"/></svg><span class="t" style="left:399.80px;top:597.37px;font-size:8.4px;color:#d8d8d8;font-family:'Liberation Mono',monospace;">Microcontroller</span><svg class="a" style="left:382.4px;top:608.5px" width="13" height="13" viewBox="0 0 13 13"><rect x="0.5" y="0.5" width="12" height="12" rx="2" fill="#deded6"/><rect x="1.6" y="2.4" width="1.8" height="3" fill="#a4ac78"/><rect x="1.6" y="7.4" width="1.8" height="3" fill="#a4ac78"/><rect x="9.6" y="2.4" width="1.8" height="3" fill="#a4ac78"/><rect x="9.6" y="7.4" width="1.8" height="3" fill="#a4ac78"/><circle cx="6.5" cy="7.6" r="1.5" fill="#666"/><path d="M4 2.2 L8.6 4.6" stroke="#555" stroke-width="0.8"/></svg><svg class="a" style="left:396px;top:612.8px" width="4" height="4.4" viewBox="0 0 4 4.4"><path d="M0 0 L3.6 2.2 L0 4.4 Z" fill="#eee"/></svg><span class="t" style="left:399.80px;top:611.62px;font-size:8.4px;color:#d8d8d8;font-family:'Liberation Mono',monospace;">Probe</span><svg class="a" style="left:382.4px;top:622.75px" width="13" height="13" viewBox="0 0 13 13"><path d="M0.5 2 L4.5 2 L5.5 3 L12.5 3 L12.5 12 L0.5 12 Z" fill="#f6dc20"/><path d="M5 11 L5 6 M8 11 L8 5" stroke="#4a7ad0" stroke-width="1.2"/><path d="M7 5 L9 5" stroke="#555" stroke-width="1.4"/></svg><svg class="a" style="left:396px;top:627.05px" width="4" height="4.4" viewBox="0 0 4 4.4"><path d="M0 0 L3.6 2.2 L0 4.4 Z" fill="#eee"/></svg><span class="t" style="left:399.80px;top:625.87px;font-size:8.4px;color:#d8d8d8;font-family:'Liberation Mono',monospace;">Tools</span><svg class="a" style="left:382.4px;top:637.0px" width="13" height="13" viewBox="0 0 13 13"><path d="M0.5 2 L4.5 2 L5.5 3 L12.5 3 L12.5 12 L0.5 12 Z" fill="#f6dc20"/><ellipse cx="6.5" cy="10.6" rx="5" ry="1.3" fill="#6cc830"/><path d="M6 10 L6.2 7 L7 7 L7.2 10 Z" fill="#b06020"/><circle cx="4.6" cy="6.4" r="1.8" fill="#7cd040"/><circle cx="8.4" cy="6.4" r="1.8" fill="#7cd040"/><circle cx="6.5" cy="5" r="2" fill="#7cd040"/></svg><svg class="a" style="left:396px;top:641.3px" width="4" height="4.4" viewBox="0 0 4 4.4"><path d="M0 0 L3.6 2.2 L0 4.4 Z" fill="#eee"/></svg><span class="t" style="left:399.80px;top:640.12px;font-size:8.4px;color:#d8d8d8;font-family:'Liberation Mono',monospace;">Project Layout</span><svg class="a" style="left:382.4px;top:651.05px" width="13" height="13.5" viewBox="0 0 13 13.5"><rect x="1" y="1" width="4" height="11.5" rx="0.8" fill="#f0ece0"/><path d="M1 3 L5 3 M1 10.5 L5 10.5" stroke="#a08060" stroke-width="0.8"/><rect x="6.5" y="2" width="4" height="11" rx="0.8" fill="#c89050" transform="rotate(-12 8.5 7.5)"/></svg><svg class="a" style="left:396px;top:655.55px" width="4" height="4.4" viewBox="0 0 4 4.4"><path d="M0 0 L3.6 2.2 L0 4.4 Z" fill="#eee"/></svg><span class="t" style="left:399.80px;top:654.37px;font-size:8.4px;color:#d8d8d8;font-family:'Liberation Mono',monospace;">Libraries (0)</span><svg class="a" style="left:382.4px;top:665.5px" width="13" height="13.5" viewBox="0 0 13 13.5"><path d="M3.5 8.5 L2.2 12.5 L4.4 11.6 L5.4 13 L6.4 9.5 Z M9.5 8.5 L10.8 12.5 L8.6 11.6 L7.6 13 L6.6 9.5 Z" fill="#e03a2a"/><circle cx="6.5" cy="5.8" r="5" fill="#f0a030"/><path d="M6.5 2.6 L7.4 4.9 L9.8 4.9 L7.9 6.3 L8.6 8.6 L6.5 7.2 L4.4 8.6 L5.1 6.3 L3.2 4.9 L5.6 4.9 Z" fill="#e03a2a"/></svg><svg class="a" style="left:396px;top:669.8px" width="4" height="4.4" viewBox="0 0 4 4.4"><path d="M0 0 L3.6 2.2 L0 4.4 Z" fill="#eee"/></svg><span class="t" style="left:399.80px;top:668.62px;font-size:8.4px;color:#d8d8d8;font-family:'Liberation Mono',monospace;">Version</span><div class="a" style="left:597px;top:561px;width:108.4px;height:18px;background:#5a5a5a;"></div><svg class="a" style="left:603.5px;top:564px" width="10" height="10" viewBox="0 0 10 10"><rect x="0.5" y="0.5" width="2.6" height="2.6" fill="#e83030"/><circle cx="7" cy="6.2" r="2.6" fill="none" stroke="#999" stroke-width="1.2"/></svg><span class="t" style="left:621.30px;top:567.22px;font-size:8.4px;color:#f0f0f0;font-family:'Liberation Mono',monospace;font-weight:bold;">Diagnostics</span><svg class="a" style="left:687.7px;top:565.3px" width="10.5" height="10.5" viewBox="0 0 10.5 10.5"><path d="M0.8 0.8 L9.7 9.7 M9.7 0.8 L0.8 9.7" stroke="#f2f2f2" stroke-width="1.5"/></svg><div class="a" style="left:597px;top:579px;width:228px;height:148px;background:#000;"></div><svg class="a" style="left:598px;top:580.5px" width="12" height="12" viewBox="0 0 12 12"><circle cx="6" cy="6" r="5.7" fill="#f8c040"/><circle cx="6" cy="6" r="4.6" fill="#f8c040"/><path d="M3.3 3.3 L8.7 8.7 M8.7 3.3 L3.3 8.7" stroke="#e82828" stroke-width="2.2"/></svg><span class="t" style="left:615.00px;top:583.42px;font-size:8.4px;color:#d0d0d0;font-family:'Liberation Mono',monospace;">Errors</span><svg class="a" style="left:598px;top:594.6px" width="12" height="12" viewBox="0 0 12 12"><path d="M6 0.6 L11.6 11 L0.4 11 Z" fill="#f8c040" stroke="#f8c040" stroke-width="0.6" stroke-linejoin="round"/><path d="M6 3.4 L6 7.4" stroke="#e02020" stroke-width="1.9"/><circle cx="6" cy="9.2" r="1" fill="#e02020"/></svg><span class="t" style="left:615.00px;top:597.62px;font-size:8.4px;color:#d0d0d0;font-family:'Liberation Mono',monospace;">Warnings</span><div class="a" style="left:656px;top:729.6px;width:25.8px;height:14.2px;background:#000;"></div><span class="t" style="left:656.80px;top:733.46px;font-size:8.6px;color:#f4f4f4;font-family:'Liberation Mono',monospace;font-weight:bold;">Saved</span><svg class="a" style="left:686px;top:730.4px" width="13" height="13" viewBox="0 0 13 13"><rect x="0.2" y="0.2" width="12.6" height="12.6" rx="1.5" fill="#f6dc20"/><path d="M3 11 L3 8 M5.5 11 L5.5 6 M8 11 L8 4 M10.5 11 L10.5 2.5" stroke="#e83020" stroke-width="1.7"/></svg><svg class="a" style="left:705px;top:730px" width="12.5" height="13" viewBox="0 0 12 12.5"><ellipse cx="6" cy="11.2" rx="5.6" ry="1.7" fill="#6cc830"/><path d="M5.2 11 L5.4 6.4 L4 5.2 L4.6 4.8 L5.8 5.8 L7.2 4.6 L7.6 5 L6.6 6.4 L6.9 11 Z" fill="#c8641e"/><circle cx="2.8" cy="5" r="2.3" fill="#7cd040"/><circle cx="9.2" cy="5" r="2.3" fill="#7cd040"/><circle cx="4.6" cy="2.6" r="2.3" fill="#7cd040"/><circle cx="7.6" cy="2.8" r="2.3" fill="#7cd040"/><circle cx="4.2" cy="6.4" r="1.6" fill="#7cd040"/><circle cx="8" cy="6.4" r="1.6" fill="#7cd040"/><path d="M5.5 10.8 L5.7 7.2 L6.5 7.2 L6.7 10.8 Z" fill="#c8641e"/></svg><svg class="a" style="left:722.4px;top:729.8px" width="13" height="13" viewBox="0 0 12 12"><path d="M1.4 10.6 A5.6 5.6 0 1 1 10.6 10.6 Z" fill="#f6d820"/><path d="M4.6 10 Q5 8 8.4 4 Q7.8 8.6 7.6 10 Q6.2 11.8 4.6 10 Z" fill="#e02020"/></svg><svg class="a" style="left:740px;top:730.5px" width="12.5" height="12.5" viewBox="0 0 12 12"><path d="M2.2 2.2 L9.8 9.8 M9.8 2.2 L2.2 9.8" stroke="#e08a20" stroke-width="1.3"/><circle cx="6" cy="6" r="2.6" fill="#f6c030"/><circle cx="2" cy="2" r="1.6" fill="#f6c030"/><circle cx="10" cy="2" r="1.6" fill="#f6c030"/><circle cx="2" cy="10" r="1.6" fill="#f6c030"/><circle cx="10" cy="10" r="1.6" fill="#f6c030"/></svg><svg class="a" style="left:757.6px;top:730.2px" width="12.5" height="12.5" viewBox="0 0 10 10"><circle cx="4.3" cy="4.3" r="3.6" fill="#5aa0ec" stroke="#3a7ad0" stroke-width="0.8"/><circle cx="3.6" cy="3.6" r="1.5" fill="#a8d0f8"/><path d="M6.8 6.8 L9.4 9.4" stroke="#3a7ad0" stroke-width="1.8" stroke-linecap="round"/></svg><svg class="a" style="left:776.6px;top:730.4px" width="13" height="13" viewBox="0 0 13 13"><path d="M4.5 1.2 L5.3 2.6 M8.5 1.2 L7.7 2.6 M1 5.5 L3 6 M1 8 L3 8 M1 10.5 L3 10 M12 5.5 L10 6 M12 8 L10 8 M12 10.5 L10 10" stroke="#e03020" stroke-width="1"/><ellipse cx="6.5" cy="7.5" rx="4" ry="5" fill="#e03020"/><rect x="3.7" y="5.5" width="2.3" height="5" fill="#f0c030"/><rect x="7" y="5.5" width="2.3" height="5" fill="#f0c030"/></svg><svg class="a" style="left:795px;top:730.5px" width="13" height="13" viewBox="0 0 13 13"><path d="M1.5 1.5 L6 6.5 L1.5 11.5 M7 1.5 L11.5 6.5 L7 11.5" stroke="#78b4f0" stroke-width="2.2" fill="none"/></svg><svg class="a" style="left:813px;top:735px" width="11" height="9" viewBox="0 0 11 9"><rect x="8" y="0" width="1.6" height="1.6" fill="#555"/><rect x="5" y="3" width="1.6" height="1.6" fill="#555"/><rect x="8" y="3" width="1.6" height="1.6" fill="#555"/><rect x="2" y="6" width="1.6" height="1.6" fill="#555"/><rect x="5" y="6" width="1.6" height="1.6" fill="#555"/><rect x="8" y="6" width="1.6" height="1.6" fill="#555"/></svg></div><div class="a" style="left:0;top:0;width:767px;height:592px;border:1px solid #7a7a7a"></div></div></body></html>
